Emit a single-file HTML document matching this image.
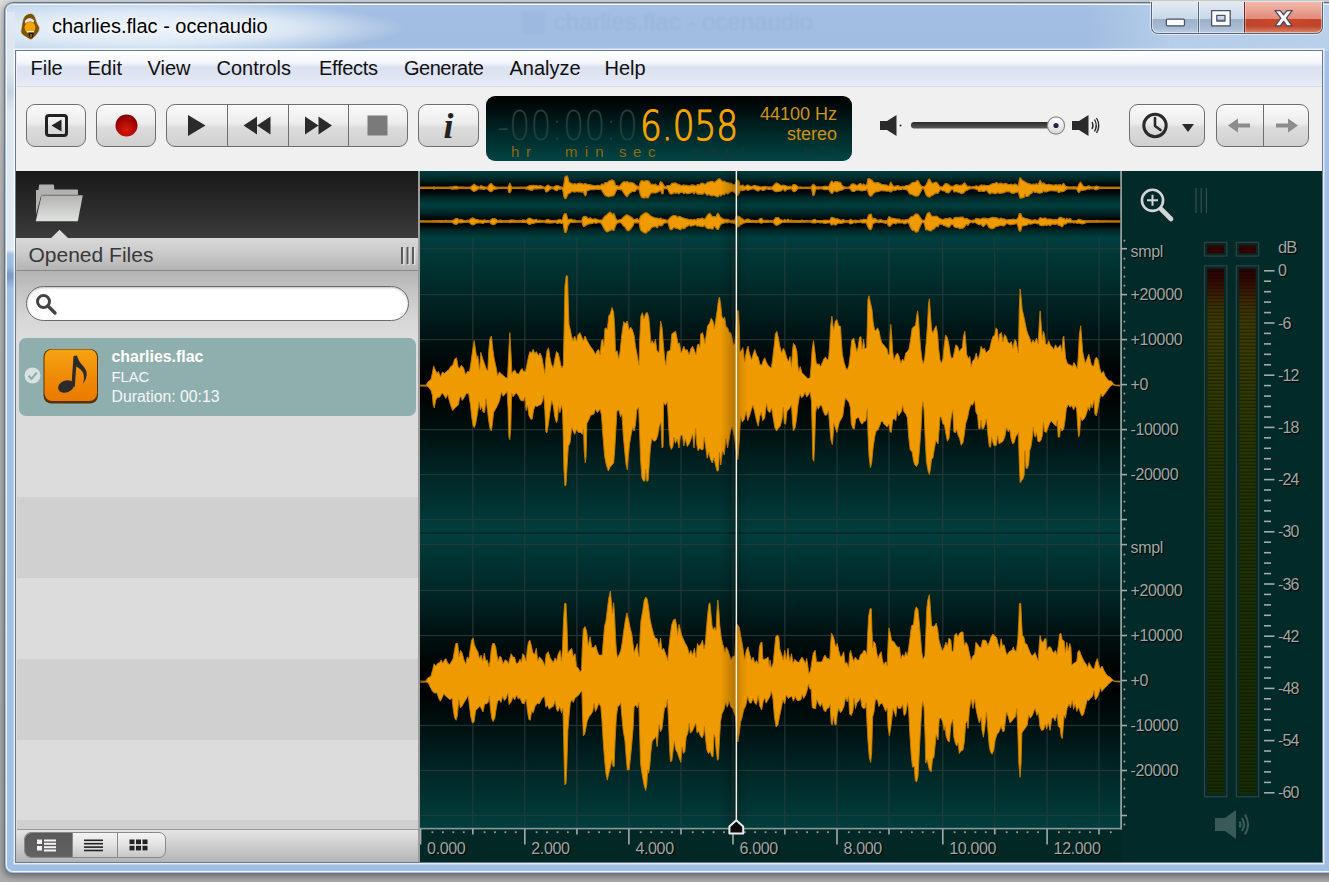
<!DOCTYPE html>
<html>
<head>
<meta charset="utf-8">
<title>charlies.flac - ocenaudio</title>
<style>
html,body{margin:0;padding:0;}
body{width:1329px;height:882px;overflow:hidden;position:relative;background:#b9b9b9;font-family:"Liberation Sans",sans-serif;}
.abs{position:absolute;}
#desk{left:0;top:0;width:1329px;height:882px;background:linear-gradient(180deg,#dcdcdc 0px,#d2d2d2 40px,#bdbdbd 200px,#b2b2b2 600px,#ababab 882px);}
#frame{left:5px;top:3px;width:1340px;height:870px;border-radius:8px;background:#a3c1e4;box-shadow:0 0 0 1px #6f7276, 0 2px 6px 2px rgba(0,0,0,.35);}
#frame-in{left:1px;top:1px;right:1px;bottom:1px;border-radius:7px;border:1.5px solid rgba(255,255,255,.85);background:linear-gradient(180deg,#a6c1e4 0px,#a2bee2 10px,#a1bde1 34px,#a4c0e3 48px,#a2bfe3 140px,#a0bfe3 400px,#a0bfe3 100%);}
#titleglow{left:2px;top:2px;width:1322px;height:46px;border-radius:6px 0 0 0;background:radial-gradient(ellipse 250px 27px at 150px 23px,rgba(240,246,252,.92) 0%,rgba(230,239,248,.8) 55%,rgba(205,222,240,0) 100%),linear-gradient(90deg,rgba(200,219,239,.9) 0px,rgba(198,217,238,.8) 150px,rgba(190,211,235,.5) 260px,rgba(180,205,233,.0) 350px,rgba(180,205,233,.0) 1080px,rgba(200,220,240,.5) 1160px,rgba(200,220,240,.6) 100%);}
#client-border{left:15px;top:49.5px;width:1306px;height:811.5px;border:1px solid #6b7b8e;box-shadow:0 0 0 1.5px rgba(255,255,255,.7);background:#f0f0f0;}
#title{left:52px;top:15px;font-size:20px;color:#000;white-space:nowrap;letter-spacing:0;text-shadow:0 0 8px #fff,0 0 8px #fff;}
#menubar{left:17px;top:51px;width:1305px;height:35px;background:linear-gradient(180deg,#ffffff 0px,#f4f6fb 12px,#dde2f1 16px,#dfe4f2 24px,#e8ecf7 35px);border-bottom:1px solid #d8dcea;}
.mi{position:absolute;top:56.5px;font-size:20px;color:#111;white-space:nowrap;}
#toolbar{left:17px;top:87px;width:1305px;height:84px;background:#f0f0f0;}
.btn{position:absolute;top:104px;height:43px;border:1px solid #6e6e6e;border-radius:9px;background:linear-gradient(180deg,#fafafa 0%,#ececec 45%,#dcdcdc 55%,#d0d0d0 100%);box-shadow:inset 0 1px 0 #fff;box-sizing:border-box;}
.sep{position:absolute;top:0;width:1px;height:100%;background:#6e6e6e;}
</style>
</head>
<body>
<div id="desk" class="abs"></div>
<div id="frame" class="abs"><div id="frame-in" class="abs"></div><div id="titleglow" class="abs"></div></div>
<div class="abs" style="left:7px;top:12px;width:8px;height:300px;background:linear-gradient(180deg,#dfe8f3 0px,#dbe5f0 60px,#c4d2e2 80px,#dde7f2 100px,#e1eaf4 238px,#a2c0e3 242px,#9bbae0 255px,#7d99c0 262px,#7f9bc2 266px,#9fbee2 276px,#a0bfe3 300px);"></div>
<div id="client-border" class="abs"></div>
<div class="abs" style="left:554px;top:8px;font-size:24px;white-space:nowrap;color:rgba(105,140,190,.17);filter:blur(1px);">charlies.flac - ocenaudio</div><div class="abs" style="left:522px;top:11px;width:23px;height:23px;border-radius:3px;background:rgba(120,150,195,.10);filter:blur(1px);"></div>
<div id="title" class="abs">charlies.flac - ocenaudio</div>

<svg class="abs" style="left:14px;top:8px" width="34" height="36" viewBox="14 8 34 36">
 <path d="M31 13.2 Q34.5 13.8 35.6 18 Q37 24 39.6 27.5 Q40 31 36.5 35 L31.8 39.6 Q30.2 40 28.6 38.8 L22.6 35 Q19.8 32.5 21.2 28.5 Q22 22 23.2 18.5 Q25.5 13.5 31 13.2 Z" fill="#7d5200" stroke="#e8eef6" stroke-width="0.9" stroke-opacity="0.8"/>
 <ellipse cx="30" cy="27.6" rx="5.4" ry="5.8" fill="#f3a300"/>
 <path d="M24.8 21 Q29.5 15.2 34.2 20.5 L33.6 22.8 Q29.5 19.8 25.4 23.6 Z" fill="#e4e4e4"/>
 <rect x="27" y="31" width="7" height="1.5" fill="#e9e9e9"/>
 <path d="M28.3 32.6 L33.6 32.6 L33 37.6 L29.6 37.8 Z" fill="#141414"/>
 <rect x="30" y="34" width="2.2" height="3.5" fill="#8a5a00"/>
</svg>
<div id="wbtns" class="abs" style="left:1150.5px;top:1.5px;width:172px;height:32.5px;border:1px solid #56657a;border-top:none;border-radius:0 0 7px 7px;box-sizing:border-box;overflow:hidden;box-shadow:0 0 0 1px rgba(255,255,255,.55);">
 <div class="abs" style="left:0;top:0;width:92px;height:17px;background:linear-gradient(180deg,#e2eaf4,#c9d7e8);"></div>
 <div class="abs" style="left:0;top:17px;width:92px;height:15px;background:linear-gradient(180deg,#9db0cb,#a9bbd4 60%,#c2d1e5);"></div>
 <div class="abs" style="left:92px;top:0;width:80px;height:17px;background:linear-gradient(180deg,#f2b9ad,#e08a78);"></div>
 <div class="abs" style="left:92px;top:17px;width:80px;height:15px;background:radial-gradient(ellipse at 50% 0%,#d24a25 0%,#c2452a 45%,#b5442f 100%);"></div>
 <div class="abs" style="left:92px;top:24px;width:80px;height:8px;background:linear-gradient(180deg,rgba(226,150,120,0),rgba(230,160,130,.85));"></div>
 <div class="abs" style="left:46px;top:0;width:1px;height:32px;background:#56657a;box-shadow:1px 0 0 rgba(255,255,255,.5),-1px 0 0 rgba(255,255,255,.3);"></div>
 <div class="abs" style="left:92px;top:0;width:1px;height:32px;background:#6a2a1c;box-shadow:1px 0 0 rgba(255,255,255,.35),-1px 0 0 rgba(255,255,255,.3);"></div>
 <div class="abs" style="left:0;top:0;width:170px;height:31px;border:1px solid rgba(255,255,255,.45);border-top:none;border-radius:0 0 6px 6px;box-sizing:border-box;"></div>
 <svg class="abs" style="left:0;top:0" width="170" height="32" viewBox="0 0 170 32">
  <rect x="14.3" y="17.2" width="18.2" height="6.6" rx="1" fill="#fbfbfb" stroke="#47536a" stroke-width="1.3"/>
  <path d="M59.6 8.6 h18.6 v15.2 h-18.6 Z M64.8 13.4 v5.6 h8.2 v-5.6 Z" fill="#fbfbfb" fill-rule="evenodd" stroke="#47536a" stroke-width="1.3" stroke-linejoin="round"/>
  <path d="M123 8.6 h5.3 l3.3 4.3 l3.3 -4.3 h5.3 l-5.8 7.6 l5.8 7.6 h-5.3 l-3.3 -4.3 l-3.3 4.3 h-5.3 l5.8 -7.6 Z" fill="#fbfbfb" stroke="#4a4a5c" stroke-width="1.3" stroke-linejoin="round"/>
 </svg>
</div>
<div id="menubar" class="abs"></div>
<div class="mi" style="left:30.5px">File</div>
<div class="mi" style="left:87.5px">Edit</div>
<div class="mi" style="left:147.5px">View</div>
<div class="mi" style="left:216.5px">Controls</div>
<div class="mi" style="left:319px;letter-spacing:-0.3px">Effects</div>
<div class="mi" style="left:404px;letter-spacing:-0.5px">Generate</div>
<div class="mi" style="left:509.5px">Analyze</div>
<div class="mi" style="left:604.5px">Help</div>
<div id="toolbar" class="abs"></div>

<div class="btn" style="left:26px;width:60px;">
 <svg class="abs" style="left:0;top:0" width="58" height="40" viewBox="0 0 58 40"><rect x="19.5" y="10.5" width="20" height="20" rx="2.5" fill="none" stroke="#222" stroke-width="3"/><path d="M34.5 14.5 L34.5 26.5 L24.5 20.5 Z" fill="#222"/></svg>
</div>
<div class="btn" style="left:96px;width:60px;">
 <svg class="abs" style="left:0;top:0" width="58" height="40" viewBox="0 0 58 40"><defs><radialGradient id="rg" cx="50%" cy="70%" r="60%"><stop offset="0" stop-color="#d81a0a"/><stop offset="0.6" stop-color="#b00a04"/><stop offset="1" stop-color="#8e0000"/></radialGradient></defs><circle cx="29.5" cy="20.5" r="11" fill="url(#rg)"/></svg>
</div>
<div class="btn" style="left:166px;width:242px;">
 <div class="sep" style="left:60px"></div><div class="sep" style="left:121px"></div><div class="sep" style="left:181px"></div>
 <svg class="abs" style="left:0;top:0" width="240" height="40" viewBox="0 0 240 40">
  <path d="M21 10 L21 31 L38.5 20.5 Z" fill="#2a2a2a"/>
  <path d="M90 11.5 L90 29.5 L76.5 20.5 Z M103.5 11.5 L103.5 29.5 L90 20.5 Z" fill="#2a2a2a"/>
  <path d="M138 11.5 L138 29.5 L151.5 20.5 Z M151.5 11.5 L151.5 29.5 L165 20.5 Z" fill="#2a2a2a"/>
  <rect x="200.5" y="10.5" width="20" height="20" fill="#7a7a7a"/>
 </svg>
</div>
<div class="btn" style="left:418px;width:61px;">
 <div class="abs" style="left:0;width:59px;top:-1.5px;text-align:center;font-family:'Liberation Serif',serif;font-style:italic;font-weight:bold;font-size:36px;color:#222;line-height:44px;">i</div>
</div>
<div id="lcd" class="abs" style="left:485.5px;top:96px;width:366px;height:65px;border-radius:9px;background:linear-gradient(180deg,#000 0%,#001010 25%,#012a2a 60%,#024444 100%);overflow:hidden;">
 <svg class="abs" style="left:0;top:0" width="366" height="65" viewBox="0 0 366 65">
  <g font-family="Liberation Sans, sans-serif">
  <text x="11" y="43.5" font-size="40" fill="#21403c" textLength="141" lengthAdjust="spacingAndGlyphs" font-family="DejaVu Sans Light, DejaVu Sans, sans-serif" font-weight="200">-00:00:0</text>
  <text x="154" y="43.5" font-size="40" fill="#f7a400" textLength="98" lengthAdjust="spacingAndGlyphs" font-family="DejaVu Sans Light, DejaVu Sans, sans-serif" font-weight="200" stroke="#f7a400" stroke-width="1.1">6.058</text>
  <text x="25" y="61" font-size="15" fill="#8c6a10" textLength="20" lengthAdjust="spacing">hr</text>
  <text x="79" y="61" font-size="15" fill="#8c6a10" textLength="38.5" lengthAdjust="spacing">min</text>
  <text x="133" y="61" font-size="15" fill="#8c6a10" textLength="36.5" lengthAdjust="spacing">sec</text>
  <text x="206" y="61" font-size="15" fill="#123a38" textLength="52" lengthAdjust="spacing">smpl</text>
  <text x="351" y="24" font-size="18" fill="#d09212" text-anchor="end">44100 Hz</text>
  <text x="351" y="43.5" font-size="18" fill="#d09212" text-anchor="end">stereo</text>
  </g>
  <path d="M318 50 L318 59 L325 54.5 Z" fill="#0d3836"/>
  <rect x="333.5" y="51" width="14" height="7" rx="3" fill="none" stroke="#0d3836" stroke-width="1.6"/>
 </svg>
</div>
<svg class="abs" style="left:875px;top:108px" width="235" height="36" viewBox="0 0 235 36">
 <defs><linearGradient id="trk" x1="0" y1="0" x2="0" y2="1"><stop offset="0" stop-color="#2a2a2a"/><stop offset="1" stop-color="#5a5a5a"/></linearGradient>
 <linearGradient id="knb" x1="0" y1="0" x2="0" y2="1"><stop offset="0" stop-color="#ffffff"/><stop offset="1" stop-color="#d8d8d8"/></linearGradient></defs>
 <path d="M5 13 L12 13 L21.5 7 L21.5 28 L12 22 L5 22 Z" fill="#2a2a2a"/>
 <circle cx="25.5" cy="17.5" r="1" fill="#2a2a2a"/>
 <rect x="36" y="14" width="146" height="6.5" rx="3.2" fill="url(#trk)"/>
 <circle cx="181" cy="17.5" r="8.6" fill="url(#knb)" stroke="#8a8a8a" stroke-width="1.2"/>
 <circle cx="181" cy="17.5" r="2.6" fill="#1e2a44"/>
 <path d="M197 13 L204 13 L213.5 7 L213.5 28 L204 22 L197 22 Z" fill="#2a2a2a"/>
 <path d="M217 14 Q219 17.5 217 21" fill="none" stroke="#2a2a2a" stroke-width="1.4"/>
 <path d="M219.5 11.5 Q223 17.5 219.5 23.5" fill="none" stroke="#2a2a2a" stroke-width="1.4"/>
 <path d="M221.5 10 Q226 17.5 221.5 25" fill="none" stroke="#2a2a2a" stroke-width="1.3"/>
</svg>
<div class="btn" style="left:1129px;width:76px;">
 <svg class="abs" style="left:0;top:0" width="74" height="40" viewBox="0 0 74 40"><circle cx="25" cy="20.5" r="11.2" fill="none" stroke="#2a2a2a" stroke-width="3"/><path d="M25 13 L25 21 L30.5 25" fill="none" stroke="#2a2a2a" stroke-width="2.6" stroke-linecap="round" stroke-linejoin="round"/><path d="M52 19 L64 19 L58 27 Z" fill="#2a2a2a"/></svg>
</div>
<div class="btn" style="left:1216px;width:93px;">
 <div class="sep" style="left:46px"></div>
 <svg class="abs" style="left:0;top:0" width="91" height="40" viewBox="0 0 91 40">
  <path d="M11 20.5 L21 13.5 L21 18.5 L33 18.5 L33 22.5 L21 22.5 L21 27.5 Z" fill="#8c8c8c"/>
  <path d="M81 20.5 L71 13.5 L71 18.5 L59 18.5 L59 22.5 L71 22.5 L71 27.5 Z" fill="#8c8c8c"/>
 </svg>
</div>
<!--TOOLBAR-->

<div class="abs" style="left:16px;top:171px;width:2px;height:691px;background:linear-gradient(180deg,#191919 0px,#3b3b3b 67px,#dadada 67px,#bdbdbd 99px,#8c8c8c 99px,#b3b3b3 100px,#dcdcdc 166px,#dcdcdc 658px,#cfcfcf 670px,#b4b4b4 691px);"></div>
<div id="lp" class="abs" style="left:17px;top:171px;width:401px;height:691px;background:#dcdcdc;overflow:hidden;">
 <div class="abs" style="left:0;top:0;width:401px;height:67px;background:linear-gradient(180deg,#191919 0%,#262626 40%,#3b3b3b 100%);"></div>
 <svg class="abs" style="left:0;top:0" width="401" height="100" viewBox="0 0 401 100">
  <defs><linearGradient id="fld" x1="0" y1="0" x2="0" y2="1"><stop offset="0" stop-color="#b4b5b3"/><stop offset="1" stop-color="#e0e2e0"/></linearGradient></defs>
  <path d="M19 19 L21.5 19 L22 14.5 Q22 13.5 23 13.5 L36 13.5 Q37 13.5 37 14.5 L37.3 18.5 L60 18.5 Q61 18.5 61 19.5 L61 25 L24 25 L19 44 Z" fill="#b2b3b1"/>
  <path d="M24.6 24.3 L65.8 24.3 L60.8 50.3 L18.8 50.3 Z" fill="url(#fld)"/>
  <path d="M24.4 24.2 L61.5 24.2" stroke="#6e6e6c" stroke-width="1.1"/>
  <path d="M42.5 58.7 L34.2 67 L51 67 Z" fill="#dadada"/>
 </svg>
 <div class="abs" style="left:0;top:67px;width:401px;height:32px;background:linear-gradient(180deg,#d8d8d8 0%,#cdcdcd 40%,#b4b4b4 100%);border-bottom:1px solid #8a8a8a;"></div>
 <div class="abs" style="left:11.5px;top:71.5px;font-size:21px;color:#383838;white-space:nowrap;">Opened Files</div>
 <div class="abs" style="left:384px;top:76px;width:2px;height:17px;background:#5c5c5c;box-shadow:5.5px 0 0 #5c5c5c,11px 0 0 #5c5c5c,1.5px 1px 0 rgba(255,255,255,.5),7px 1px 0 rgba(255,255,255,.5),12.5px 1px 0 rgba(255,255,255,.5);"></div>
 <div class="abs" style="left:0;top:100px;width:401px;height:66px;background:linear-gradient(180deg,#b3b3b3 0%,#c4c4c4 30%,#d6d6d6 70%,#dcdcdc 100%);"></div>
 <div class="abs" style="left:9px;top:115px;width:381px;height:33px;border:1.5px solid #6a6a6a;border-radius:18px;background:#fff;box-shadow:inset 0 1px 2px rgba(0,0,0,.25);"></div>
 <svg class="abs" style="left:17px;top:121px" width="26" height="26" viewBox="0 0 26 26"><circle cx="9.5" cy="9.5" r="6" fill="none" stroke="#444" stroke-width="3"/><path d="M14 14 L21 21" stroke="#444" stroke-width="3.4" stroke-linecap="round"/></svg>
 <!-- stripes -->
 <div class="abs" style="left:0;top:246px;width:401px;height:80px;background:#dcdcdc;"></div>
 <div class="abs" style="left:0;top:326px;width:401px;height:81px;background:#d0d0d0;"></div>
 <div class="abs" style="left:0;top:407px;width:401px;height:81px;background:#dcdcdc;"></div>
 <div class="abs" style="left:0;top:488px;width:401px;height:81px;background:#d0d0d0;"></div>
 <div class="abs" style="left:0;top:569px;width:401px;height:80px;background:#dcdcdc;"></div>
 <div class="abs" style="left:0;top:649px;width:401px;height:10px;background:#d0d0d0;"></div>
 <!-- selected item -->
 <div class="abs" style="left:2px;top:167px;width:397px;height:78px;border-radius:7px;background:#8fafae;"></div>
 <svg class="abs" style="left:5px;top:194px" width="22" height="22" viewBox="0 0 22 22"><circle cx="10.5" cy="10.5" r="8" fill="#d9e2e2"/><path d="M6.5 10.8 L9.5 13.8 L14.8 7.6" fill="none" stroke="#8fafae" stroke-width="2.2"/></svg>
 <svg class="abs" style="left:25px;top:176px" width="60" height="60" viewBox="0 0 60 60">
  <defs><linearGradient id="org" x1="0" y1="0" x2="0" y2="1"><stop offset="0" stop-color="#f6a312"/><stop offset="0.5" stop-color="#f08c06"/><stop offset="1" stop-color="#ea7a00"/></linearGradient></defs>
  <rect x="1.5" y="2" width="54.5" height="54.5" rx="8" fill="#5a3000"/>
  <rect x="2.5" y="2.5" width="52.5" height="51.5" rx="7.5" fill="url(#org)"/>
  <ellipse cx="24" cy="39.5" rx="8.2" ry="6" transform="rotate(-22 24 39.5)" fill="#2b2b2b"/>
  <path d="M29.5 38 L31.5 9 L35 8.5 Q36 14 42 20 Q48 27 41 37 Q44 27 38.5 22.5 Q35.5 20 34.2 19.5 L32.8 40 Z" fill="#2b2b2b"/>
 </svg>
 <div class="abs" style="left:94.5px;top:176px;font-size:15.9px;font-weight:bold;color:#fff;white-space:nowrap;line-height:20px;">charlies.flac</div>
 <div class="abs" style="left:94.5px;top:196px;font-size:14.7px;color:#f4f8f8;white-space:nowrap;line-height:20px;">FLAC</div>
 <div class="abs" style="left:94.5px;top:216px;font-size:15.8px;color:#f4f8f8;white-space:nowrap;line-height:20px;">Duration: 00:13</div>
 <!-- bottom bar -->
 <div class="abs" style="left:0;top:658px;width:401px;height:33px;background:linear-gradient(180deg,#e4e4e4 0%,#cfcfcf 45%,#b4b4b4 100%);border-top:1px solid #9a9a9a;box-sizing:border-box;"></div>
 <div class="abs" style="left:7px;top:661px;width:142px;height:26px;border-radius:7px;border:1px solid #8a8a8a;box-sizing:border-box;background:linear-gradient(180deg,#f4f4f4 0%,#e2e2e2 50%,#c6c6c6 100%);overflow:hidden;">
  <div class="abs" style="left:0;top:0;width:47px;height:26px;background:linear-gradient(180deg,#5a5a5a,#636363);"></div>
  <div class="abs" style="left:92px;top:0;width:1px;height:25px;background:#8a8a8a;"></div>
  <div class="abs" style="left:47px;top:0;width:1px;height:25px;background:#8a8a8a;"></div>
  <svg class="abs" style="left:0;top:-0.5px" width="140" height="23" viewBox="0 0 140 23">
   <g fill="#f4f4f4"><rect x="12" y="6.5" width="5" height="4.5"/><rect x="12" y="13" width="5" height="4.5"/><rect x="19" y="6.5" width="12" height="2"/><rect x="19" y="9.8" width="12" height="2"/><rect x="19" y="13.2" width="12" height="2"/><rect x="19" y="16.5" width="12" height="2"/></g>
   <g fill="#222"><rect x="59" y="6.5" width="19" height="1.6"/><rect x="59" y="9.9" width="19" height="1.6"/><rect x="59" y="13.3" width="19" height="1.6"/><rect x="59" y="16.7" width="19" height="1.6"/></g>
   <g fill="#222"><rect x="104.5" y="6.5" width="5" height="4.6"/><rect x="111" y="6.5" width="5" height="4.6"/><rect x="117.5" y="6.5" width="5" height="4.6"/><rect x="104.5" y="12.8" width="5" height="4.6"/><rect x="111" y="12.8" width="5" height="4.6"/><rect x="117.5" y="12.8" width="5" height="4.6"/></g>
  </svg>
 </div>
</div>
<div class="abs" style="left:418px;top:171px;width:2px;height:691px;background:#9c9c9c;"></div>
<!--LEFT-->
<div id="wv" class="abs" style="left:420px;top:171px;width:701px;height:658px;background:#003c3b;overflow:hidden;">
<div class="abs" style="left:0;top:0;width:701px;height:33.5px;background:linear-gradient(180deg,#003e3d 0%,#002a2a 22%,#000 45%,#000 58%,#002a2a 80%,#003e3d 100%);"></div>
<div class="abs" style="left:0;top:33.5px;width:701px;height:33.5px;background:linear-gradient(180deg,#003e3d 0%,#002a2a 22%,#000 45%,#000 58%,#002a2a 80%,#004040 100%);"></div>
<div class="abs" style="left:0;top:67px;width:701px;height:295px;background:linear-gradient(180deg,#003e3d 0%,#002827 19%,#001010 35%,#000 48%,#000 52%,#001010 65%,#002827 81%,#003e3d 100%);"></div>
<div class="abs" style="left:0;top:362px;width:701px;height:296px;background:linear-gradient(180deg,#003e3d 0%,#002827 19%,#001010 35%,#000 48%,#000 52%,#001010 65%,#002827 81%,#003e3d 100%);"></div>
<svg class="abs" style="left:0;top:0" width="701" height="658" viewBox="420 171 701 658">
<g fill="#2e3b3a" opacity="0.8"><rect x="472.2" y="238" width="1.2" height="590" /><rect x="524.2" y="238" width="1.2" height="590" /><rect x="576.3" y="238" width="1.2" height="590" /><rect x="628.3" y="238" width="1.2" height="590" /><rect x="680.4" y="238" width="1.2" height="590" /><rect x="732.4" y="238" width="1.2" height="590" /><rect x="784.2" y="238" width="1.2" height="590" /><rect x="836.4" y="238" width="1.2" height="590" /><rect x="888.4" y="238" width="1.2" height="590" /><rect x="942.2" y="238" width="1.2" height="590" /><rect x="994.2" y="238" width="1.2" height="590" /><rect x="1046.5" y="238" width="1.2" height="590" /><rect x="1098.4" y="238" width="1.2" height="590" /><rect x="420" y="248.1" width="701" height="1.2" /><rect x="420" y="294.0" width="701" height="1.2" /><rect x="420" y="339.0" width="701" height="1.2" /><rect x="420" y="384.0" width="701" height="1.2" /><rect x="420" y="429.0" width="701" height="1.2" /><rect x="420" y="474.0" width="701" height="1.2" /><rect x="420" y="519.0" width="701" height="1.2" /><rect x="420" y="544.0" width="701" height="1.2" /><rect x="420" y="589.9" width="701" height="1.2" /><rect x="420" y="634.9" width="701" height="1.2" /><rect x="420" y="679.9" width="701" height="1.2" /><rect x="420" y="724.9" width="701" height="1.2" /><rect x="420" y="769.9" width="701" height="1.2" /><rect x="420" y="814.9" width="701" height="1.2" /></g>
<rect x="420" y="532.3" width="701" height="1.4" fill="#002423"/>
<defs><linearGradient id="cshadow" gradientUnits="userSpaceOnUse" x1="720" y1="0" x2="748" y2="0"><stop offset="0" stop-color="#000" stop-opacity="0"/><stop offset="0.5" stop-color="#000" stop-opacity="0.22"/><stop offset="0.571" stop-color="#000" stop-opacity="0.25"/><stop offset="0.72" stop-color="#000" stop-opacity="0.1"/><stop offset="1" stop-color="#000" stop-opacity="0"/></linearGradient>
<path id="w1" d="M420.4 385.6 L426.2 385.6 L427.5 382.2 L430.9 379.5 L432.3 373.4 L433.6 365.9 L435.0 369.3 L437.0 373.4 L438.4 371.3 L440.4 376.8 L442.5 372.0 L444.5 373.4 L446.6 371.3 L448.6 370.0 L450.6 366.6 L452.7 365.2 L454.7 359.1 L456.5 357.7 L458.1 366.6 L459.5 368.6 L461.3 365.2 L463.6 367.9 L465.6 374.7 L467.6 371.3 L469.4 372.0 L471.0 362.5 L472.4 351.6 L474.2 340.7 L475.8 351.6 L476.8 358.4 L477.8 355.7 L479.5 370.0 L480.8 352.3 L482.6 358.4 L484.6 363.9 L486.7 370.0 L487.8 370.7 L488.7 351.6 L489.8 339.4 L491.4 336.0 L492.8 348.9 L494.2 358.4 L496.2 367.9 L497.6 376.1 L499.3 372.0 L501.7 374.1 L503.7 376.1 L505.7 377.5 L507.5 378.1 L508.5 357.1 L509.8 332.6 L511.2 357.1 L511.9 373.4 L513.2 371.3 L514.8 370.0 L516.6 373.4 L518.7 374.1 L520.7 370.0 L522.1 368.6 L523.4 371.3 L525.5 371.3 L526.8 365.2 L528.4 357.1 L529.8 351.6 L531.6 353.0 L533.2 349.3 L534.7 353.7 L536.3 351.6 L538.4 355.7 L540.1 353.0 L541.8 357.1 L543.1 363.9 L544.8 373.4 L545.9 358.4 L547.2 350.3 L548.6 347.8 L549.9 357.1 L551.3 363.9 L553.3 367.9 L554.7 359.8 L556.5 351.6 L558.1 353.0 L559.5 358.4 L560.8 365.2 L561.9 367.9 L563.3 365.2 L564.2 324.4 L564.9 286.3 L566.3 275.4 L567.6 276.1 L568.3 304.0 L569.0 324.4 L570.3 329.8 L571.7 336.6 L573.1 340.7 L574.7 336.0 L576.5 341.4 L577.8 335.3 L579.9 332.6 L581.6 336.6 L583.3 340.7 L585.0 336.0 L586.7 340.0 L588.7 343.4 L590.7 346.8 L592.8 349.6 L594.0 351.6 L595.4 354.3 L597.4 350.3 L598.8 349.6 L600.1 355.0 L601.5 340.7 L602.8 339.4 L603.8 346.2 L604.9 328.5 L606.2 327.8 L607.3 329.8 L608.7 316.2 L610.3 313.5 L612.0 307.4 L613.7 312.2 L614.7 327.1 L615.5 351.6 L617.1 350.9 L618.8 358.4 L620.1 351.6 L621.9 333.9 L623.7 321.7 L625.3 323.7 L627.3 321.0 L629.1 329.8 L630.7 327.1 L632.4 329.8 L634.1 335.3 L635.5 346.2 L637.3 355.7 L638.9 365.2 L639.8 338.0 L640.9 316.2 L642.3 312.8 L644.1 319.0 L645.7 313.5 L647.3 312.4 L648.8 317.6 L649.8 328.5 L650.9 343.4 L652.2 340.7 L653.8 344.1 L655.5 339.4 L656.8 350.3 L659.0 353.0 L659.7 335.3 L660.6 321.0 L662.0 327.1 L663.1 340.7 L664.5 357.1 L665.8 365.2 L667.2 351.6 L668.8 350.9 L670.4 350.3 L671.8 333.9 L673.6 332.6 L675.6 331.2 L677.0 338.0 L678.1 344.1 L679.4 342.8 L681.1 353.0 L682.4 350.3 L683.8 346.2 L685.4 350.3 L687.2 349.6 L689.2 355.0 L690.8 348.9 L692.6 346.2 L694.4 350.3 L696.0 355.0 L697.4 344.8 L698.7 344.1 L699.8 347.5 L700.8 333.9 L702.5 332.6 L703.9 338.0 L704.9 343.4 L706.2 335.3 L707.6 325.8 L709.3 323.7 L711.2 318.3 L713.0 321.0 L714.4 328.5 L715.7 320.3 L717.1 310.8 L718.5 299.9 L719.4 297.2 L720.5 302.6 L721.9 316.2 L723.2 319.0 L724.6 316.9 L726.2 327.1 L727.7 327.8 L729.3 332.6 L730.7 332.6 L732.1 338.0 L733.4 344.8 L734.8 343.4 L735.5 335.3 L737.1 310.8 L738.5 310.8 L739.3 327.1 L739.9 351.6 L741.6 350.3 L742.9 347.5 L744.7 361.8 L746.3 351.6 L748.0 346.2 L749.3 353.0 L751.5 359.8 L753.1 354.3 L754.8 349.6 L756.5 355.0 L758.2 357.1 L759.9 364.5 L761.6 365.2 L763.3 360.5 L764.7 357.7 L766.5 362.5 L768.1 365.2 L770.0 367.3 L771.4 367.9 L772.7 358.4 L774.1 346.2 L775.4 333.9 L776.8 331.2 L778.4 338.0 L779.8 346.2 L781.6 353.0 L783.3 348.2 L785.0 351.6 L786.6 357.1 L788.4 361.8 L790.1 356.4 L791.5 366.6 L792.4 351.6 L793.4 343.4 L795.2 345.5 L796.9 351.6 L797.9 365.2 L798.8 371.3 L800.2 366.6 L802.0 372.7 L804.0 374.7 L806.0 376.8 L808.1 378.8 L810.1 377.5 L811.1 365.2 L812.2 348.9 L813.5 340.7 L814.9 351.6 L816.2 362.5 L817.6 364.5 L819.2 363.9 L820.6 366.6 L822.4 362.5 L824.1 358.4 L825.5 357.1 L827.1 359.8 L828.5 359.1 L829.6 346.2 L830.5 327.1 L831.9 316.2 L832.8 324.4 L833.7 329.8 L835.3 321.0 L836.9 319.6 L838.7 325.8 L840.5 326.4 L841.4 340.7 L842.4 354.3 L844.1 362.5 L845.9 367.9 L847.3 370.0 L848.9 365.2 L850.3 354.3 L851.6 340.7 L853.7 338.0 L855.0 343.4 L856.8 351.6 L858.1 347.5 L859.5 337.3 L860.9 336.6 L862.2 349.6 L863.6 339.4 L864.9 348.9 L866.6 347.5 L867.3 324.4 L867.9 299.9 L869.0 295.8 L870.4 302.6 L872.0 309.4 L873.1 321.7 L874.5 329.8 L876.1 330.5 L877.5 327.8 L879.1 331.2 L880.4 338.0 L881.8 342.8 L883.6 344.8 L885.3 346.8 L887.0 348.9 L888.3 355.0 L889.4 354.3 L890.0 335.3 L890.8 324.4 L891.7 335.3 L892.7 351.6 L894.0 359.8 L895.8 355.0 L897.6 353.0 L899.2 356.4 L900.8 363.2 L902.6 359.1 L904.0 361.1 L905.7 353.0 L907.4 351.6 L909.0 348.9 L910.4 340.7 L912.1 328.5 L913.9 326.4 L915.5 325.8 L916.6 316.2 L917.6 310.8 L918.5 319.0 L919.6 335.3 L920.7 348.9 L922.1 359.8 L923.4 363.9 L924.8 357.1 L926.1 343.4 L927.5 324.4 L928.5 304.0 L929.4 298.8 L930.5 314.9 L931.6 329.8 L932.9 333.2 L934.6 328.5 L936.2 325.8 L937.6 333.9 L938.7 348.9 L940.0 359.8 L941.4 363.2 L943.0 358.4 L944.1 346.2 L945.5 335.3 L946.0 335.3 L947.4 338.0 L948.7 343.4 L950.1 353.0 L951.4 358.4 L953.1 357.7 L954.4 351.6 L955.8 344.8 L957.6 346.2 L959.3 351.6 L961.0 348.9 L962.3 347.5 L963.4 336.6 L964.8 331.2 L965.7 340.7 L966.7 354.3 L968.4 358.4 L969.8 356.4 L971.2 366.6 L972.5 361.1 L974.6 359.1 L976.2 353.0 L978.0 359.8 L979.7 354.3 L981.1 346.2 L982.7 349.6 L984.4 348.2 L986.1 353.0 L987.9 350.9 L989.5 349.6 L991.2 342.1 L992.9 336.6 L994.7 335.3 L996.1 327.8 L997.4 329.8 L998.4 341.4 L999.7 333.9 L1001.5 332.6 L1002.9 342.1 L1004.5 334.6 L1006.1 336.6 L1007.9 342.1 L1009.7 343.4 L1011.3 341.4 L1012.9 348.2 L1014.7 339.4 L1016.0 340.7 L1017.0 346.2 L1018.4 353.0 L1019.2 310.8 L1020.1 289.0 L1021.1 297.2 L1022.2 309.4 L1023.8 316.2 L1025.2 323.0 L1026.5 329.8 L1027.9 333.9 L1029.7 338.0 L1031.4 343.4 L1033.1 340.0 L1034.7 342.8 L1036.5 338.0 L1038.2 344.1 L1039.2 324.4 L1040.1 310.8 L1041.2 324.4 L1042.3 339.4 L1043.4 331.2 L1044.6 335.3 L1045.6 344.1 L1047.3 344.8 L1048.7 340.7 L1050.5 345.5 L1052.1 346.8 L1053.7 349.6 L1055.5 344.8 L1057.3 348.2 L1058.9 346.8 L1060.5 344.8 L1061.9 351.6 L1063.0 338.0 L1063.8 336.0 L1064.6 346.2 L1065.7 358.4 L1067.3 363.2 L1069.1 364.5 L1070.9 365.2 L1072.5 366.6 L1073.9 362.5 L1075.5 365.2 L1077.3 368.6 L1078.2 357.1 L1079.3 335.3 L1080.7 325.8 L1081.7 338.0 L1082.7 351.6 L1084.1 358.4 L1085.4 363.2 L1087.2 358.4 L1088.8 354.3 L1090.2 359.8 L1091.5 365.2 L1093.6 366.6 L1094.9 359.8 L1096.3 357.1 L1098.1 359.8 L1099.7 367.9 L1101.3 373.4 L1103.5 371.3 L1105.1 376.1 L1107.2 378.8 L1109.2 380.9 L1111.3 380.9 L1113.3 383.6 L1115.3 385.6 L1120.1 385.9 L1120.1 385.7 L1114.7 385.4 L1112.6 384.8 L1110.6 386.1 L1108.5 388.8 L1106.5 391.6 L1104.5 394.3 L1102.4 397.0 L1100.8 393.6 L1099.4 400.4 L1097.7 409.9 L1096.3 416.0 L1094.9 414.0 L1094.0 400.4 L1092.2 407.9 L1090.9 403.8 L1089.5 410.6 L1088.1 407.2 L1086.8 412.6 L1085.4 416.7 L1083.6 419.4 L1082.0 420.8 L1080.7 417.4 L1079.6 434.4 L1078.6 437.1 L1077.7 426.2 L1076.6 408.6 L1075.2 405.8 L1073.6 409.9 L1071.8 405.8 L1070.0 407.2 L1068.4 404.5 L1066.4 408.6 L1065.0 420.8 L1063.7 429.0 L1061.9 431.0 L1060.5 427.6 L1059.6 437.1 L1058.2 437.1 L1057.3 420.1 L1056.4 426.2 L1054.8 424.9 L1053.2 423.5 L1051.4 420.8 L1049.6 423.5 L1048.0 427.6 L1046.4 432.4 L1044.6 431.7 L1043.4 422.2 L1042.6 434.4 L1041.2 439.8 L1039.6 441.9 L1037.8 441.2 L1036.5 432.4 L1035.5 437.1 L1034.4 435.8 L1033.3 426.9 L1032.4 437.1 L1031.0 446.6 L1029.7 450.7 L1028.7 464.3 L1027.3 468.4 L1026.0 468.4 L1024.9 450.7 L1024.2 475.2 L1022.8 479.3 L1021.5 480.7 L1020.1 482.7 L1019.2 461.6 L1018.4 432.4 L1017.4 434.4 L1015.6 437.1 L1014.3 442.6 L1012.6 443.9 L1011.0 438.5 L1009.7 429.0 L1008.3 431.7 L1006.5 427.6 L1004.8 437.1 L1003.1 441.2 L1001.1 442.6 L999.0 443.9 L997.7 435.8 L996.3 445.3 L994.3 446.0 L992.9 442.6 L991.6 437.1 L990.6 447.3 L989.3 446.6 L987.9 434.4 L986.5 418.8 L985.4 423.5 L983.8 428.3 L982.0 429.0 L981.1 420.1 L980.0 429.0 L978.6 428.3 L977.6 415.4 L975.9 412.0 L974.6 400.4 L972.5 405.2 L970.8 404.5 L969.1 409.9 L967.5 418.1 L965.7 423.5 L964.4 434.4 L963.0 442.6 L961.2 445.3 L959.6 438.5 L958.0 435.1 L956.6 429.6 L955.2 433.0 L953.9 431.7 L952.8 410.6 L951.7 414.0 L950.4 423.5 L949.0 438.5 L947.4 441.2 L946.0 434.4 L944.4 424.9 L942.7 423.5 L941.4 417.4 L940.0 416.7 L939.3 427.6 L938.0 443.9 L935.9 440.5 L934.3 449.4 L932.9 458.2 L931.6 458.9 L930.5 468.4 L929.4 474.5 L928.1 471.1 L926.4 461.6 L925.1 437.1 L924.0 409.9 L922.9 401.8 L922.1 407.2 L921.0 429.0 L919.6 448.0 L918.3 463.0 L916.6 466.4 L914.9 465.0 L913.5 460.9 L912.1 452.1 L910.1 449.4 L908.7 437.1 L907.4 418.1 L906.0 414.0 L904.0 412.0 L902.6 405.2 L901.7 411.3 L900.3 413.3 L898.5 416.0 L897.2 410.6 L895.8 420.8 L894.5 418.8 L892.7 419.4 L891.3 432.4 L890.0 431.7 L889.0 424.2 L887.2 426.9 L885.6 425.6 L884.0 424.2 L882.2 420.8 L880.9 422.2 L879.5 426.2 L877.7 430.3 L876.1 431.0 L874.7 437.1 L873.1 448.0 L871.7 463.0 L870.4 467.7 L869.0 456.2 L867.9 431.7 L867.3 408.6 L865.9 420.8 L863.9 421.5 L862.2 424.2 L860.5 422.2 L858.7 417.4 L857.1 418.1 L855.7 419.4 L854.3 429.0 L852.7 428.3 L851.3 423.5 L850.3 407.2 L848.9 402.4 L847.3 400.4 L845.5 397.7 L844.1 405.8 L842.8 416.0 L841.0 419.4 L839.4 422.2 L838.0 427.6 L836.9 432.4 L835.3 427.6 L833.9 423.5 L833.2 434.4 L832.3 444.6 L830.9 439.8 L829.6 424.9 L828.5 410.6 L826.9 414.7 L825.1 415.4 L823.3 411.3 L821.7 405.8 L820.3 405.2 L818.3 409.2 L816.9 405.8 L815.6 412.6 L814.6 445.3 L813.8 461.3 L812.8 458.9 L812.2 431.7 L811.5 401.8 L810.1 392.0 L808.1 395.6 L806.5 397.0 L805.1 392.2 L803.3 396.3 L801.6 397.7 L800.2 394.3 L799.2 397.7 L797.9 405.8 L796.5 419.4 L795.2 427.6 L793.4 431.0 L792.4 420.8 L791.5 405.2 L789.0 409.2 L787.0 411.3 L785.6 424.2 L784.3 423.5 L783.3 407.2 L782.0 419.4 L780.2 426.2 L778.4 428.3 L776.5 431.0 L774.8 427.6 L773.0 416.7 L771.6 407.9 L770.0 412.6 L768.1 411.3 L766.5 403.8 L764.7 418.1 L762.7 420.8 L761.3 412.0 L759.7 416.7 L758.3 426.2 L756.5 420.8 L754.5 411.3 L752.9 405.2 L751.5 409.2 L749.7 415.4 L747.7 420.8 L746.1 411.3 L744.3 419.4 L742.3 422.2 L740.6 416.7 L739.3 441.2 L737.9 459.6 L736.1 450.7 L734.8 439.8 L733.4 431.7 L732.1 426.9 L730.7 430.3 L729.3 438.5 L727.6 448.0 L725.9 438.5 L724.3 454.8 L722.5 450.7 L720.8 465.0 L719.4 452.1 L718.5 470.5 L717.1 471.1 L715.3 464.3 L714.0 457.5 L712.3 463.0 L710.3 458.9 L708.9 452.1 L707.2 458.2 L705.8 448.0 L704.2 437.1 L703.1 449.4 L701.5 450.0 L699.8 448.0 L698.1 450.7 L696.7 443.9 L695.7 428.3 L694.0 448.0 L692.6 433.7 L690.8 439.8 L689.2 443.9 L687.2 446.6 L685.4 439.2 L683.8 446.0 L682.4 435.1 L680.4 435.8 L679.0 448.0 L677.2 439.2 L675.3 443.2 L674.0 437.1 L672.9 446.6 L671.3 449.4 L669.9 445.3 L668.5 424.9 L667.4 401.8 L665.4 405.2 L663.6 402.4 L663.1 446.6 L662.0 448.0 L660.9 422.2 L659.3 426.2 L657.7 435.8 L655.9 440.5 L653.8 441.2 L651.8 438.5 L650.4 448.0 L649.1 467.1 L648.1 480.7 L646.8 481.3 L645.7 469.1 L645.0 480.7 L643.6 481.3 L641.9 477.9 L640.5 458.9 L639.6 431.7 L638.6 407.2 L636.8 409.9 L635.5 424.9 L634.1 431.0 L632.8 427.6 L631.4 433.0 L629.6 443.9 L628.3 456.2 L627.3 469.8 L626.0 464.3 L624.6 450.7 L623.2 434.4 L621.9 414.0 L620.5 416.7 L618.8 409.9 L616.9 411.3 L615.8 431.7 L614.7 450.7 L613.7 463.0 L612.0 465.0 L610.1 467.1 L608.3 471.1 L606.2 464.3 L604.6 456.2 L602.8 434.4 L601.5 415.4 L600.1 409.2 L597.4 412.6 L595.4 409.2 L594.0 414.0 L592.1 414.7 L590.5 415.4 L588.7 420.1 L586.9 423.5 L586.1 456.2 L585.3 463.0 L584.2 450.7 L583.5 429.0 L582.6 434.4 L580.5 432.4 L578.5 432.4 L576.5 429.6 L574.7 434.4 L573.3 431.0 L571.7 427.6 L570.1 442.6 L568.3 446.6 L566.9 469.8 L566.0 484.7 L564.9 486.1 L563.9 468.4 L563.3 437.1 L562.5 411.3 L561.5 405.2 L559.9 412.6 L558.5 406.5 L557.6 419.4 L556.5 422.8 L554.7 416.7 L553.3 405.8 L551.7 400.4 L549.9 412.6 L548.3 424.9 L546.9 433.0 L545.9 431.7 L544.9 411.3 L543.8 395.0 L542.5 401.1 L541.1 404.5 L539.1 405.2 L537.0 406.5 L535.2 405.8 L533.6 409.9 L532.3 418.8 L530.9 419.4 L528.9 415.4 L527.5 405.2 L526.1 410.6 L524.8 397.0 L523.4 401.1 L520.7 400.4 L518.7 396.3 L516.6 392.9 L514.8 394.3 L513.2 397.0 L511.6 392.9 L510.8 427.6 L509.8 439.6 L508.9 437.1 L508.0 407.2 L507.1 391.6 L505.1 394.3 L503.0 396.3 L501.4 392.2 L499.6 400.4 L497.6 405.2 L495.5 409.2 L493.6 412.6 L492.5 423.5 L491.4 431.0 L490.1 429.0 L488.7 420.8 L487.4 409.9 L486.0 398.4 L484.6 412.6 L483.0 412.0 L481.7 406.5 L480.3 409.9 L479.2 401.8 L477.4 414.0 L475.8 423.5 L474.4 427.6 L473.1 426.2 L471.7 416.7 L470.4 404.5 L468.6 393.6 L466.3 393.6 L464.2 397.7 L462.2 400.4 L460.8 396.3 L459.5 398.4 L458.5 404.5 L456.8 406.5 L454.7 407.9 L452.7 410.6 L451.3 407.2 L449.6 401.8 L447.7 394.3 L445.9 398.4 L443.8 395.0 L442.2 392.9 L439.8 397.0 L437.0 397.7 L435.7 400.4 L434.3 407.9 L433.2 404.5 L432.3 395.0 L430.9 390.2 L428.2 386.8 L426.2 386.1 L420.4 386.1 Z"/><path id="w2" d="M420.4 681.9 L425.5 681.6 L427.5 678.2 L430.9 676.2 L432.7 669.4 L434.1 663.9 L435.7 666.0 L437.7 663.3 L439.8 662.6 L441.1 659.9 L442.8 663.3 L444.5 659.9 L445.9 658.5 L447.7 663.3 L449.6 664.6 L451.3 661.9 L453.1 658.5 L454.5 650.3 L455.8 643.5 L457.7 643.5 L459.1 657.1 L460.4 650.3 L462.2 653.1 L464.0 659.9 L465.9 663.9 L467.2 657.1 L469.0 658.5 L470.4 647.6 L471.7 640.1 L473.1 638.1 L474.4 644.9 L476.2 649.0 L477.8 651.7 L479.5 658.5 L481.2 655.1 L482.6 661.2 L484.4 653.1 L485.7 660.5 L487.4 659.9 L489.0 666.7 L490.1 661.2 L491.2 650.3 L492.5 643.5 L494.4 643.5 L495.8 647.6 L496.9 654.4 L498.0 661.2 L499.6 656.5 L501.2 657.1 L503.0 663.9 L505.1 659.9 L506.7 660.5 L508.5 663.9 L509.8 658.5 L511.2 653.7 L512.9 657.1 L514.6 657.1 L516.2 663.3 L518.0 663.3 L520.0 659.2 L521.4 662.6 L522.7 653.7 L524.4 655.8 L526.1 661.2 L527.1 650.3 L528.4 642.2 L529.8 640.1 L531.2 644.9 L532.9 653.1 L534.7 654.4 L536.3 648.3 L537.7 661.2 L539.3 657.1 L541.1 658.5 L542.9 661.2 L544.8 666.0 L546.1 654.4 L548.3 651.7 L549.9 657.1 L551.6 659.9 L553.3 662.6 L555.1 657.8 L556.5 661.2 L558.1 654.4 L560.1 650.3 L561.5 661.2 L562.5 647.6 L563.5 620.4 L564.6 603.4 L566.0 603.4 L566.9 623.1 L567.9 653.1 L569.7 650.3 L571.7 648.3 L573.3 656.5 L575.1 653.7 L576.5 666.7 L578.2 668.0 L580.1 672.1 L581.5 669.4 L582.3 647.6 L583.3 629.2 L585.0 626.5 L586.7 631.3 L588.3 645.6 L590.1 636.7 L591.8 647.6 L594.0 647.6 L595.6 644.9 L597.0 650.3 L598.8 655.1 L600.5 655.1 L602.2 655.1 L603.2 642.2 L604.6 625.8 L606.0 620.4 L607.3 609.5 L608.7 598.6 L610.3 591.2 L611.7 604.1 L612.4 613.6 L613.7 602.7 L614.7 617.7 L615.5 636.7 L616.4 650.3 L617.4 657.8 L619.2 654.4 L620.9 650.3 L622.3 642.2 L623.7 631.3 L625.3 620.4 L626.9 612.9 L628.7 620.4 L630.0 627.2 L631.8 634.0 L633.2 644.9 L634.1 652.4 L635.9 647.6 L637.3 643.5 L638.2 653.1 L639.2 657.1 L640.0 636.7 L640.9 621.1 L642.7 610.9 L644.1 600.7 L645.7 597.0 L647.3 599.3 L648.7 608.2 L650.0 619.0 L651.8 627.2 L653.6 634.0 L655.2 638.1 L657.2 638.8 L659.0 647.6 L660.6 638.1 L662.0 650.3 L663.6 648.3 L665.4 653.1 L666.8 657.1 L667.7 660.5 L668.8 647.6 L670.2 635.4 L671.8 624.5 L673.6 619.7 L675.3 619.0 L676.7 625.8 L677.7 635.4 L679.0 624.5 L680.4 629.9 L681.7 635.4 L683.5 639.4 L685.4 643.5 L687.6 647.6 L689.2 654.4 L690.8 650.3 L692.6 655.1 L694.4 648.3 L696.0 657.8 L697.4 643.5 L699.0 646.3 L700.8 644.2 L702.5 640.1 L703.9 649.0 L705.3 643.5 L706.2 631.3 L707.6 615.0 L708.9 604.1 L709.9 602.7 L711.0 613.6 L712.1 625.8 L713.4 629.9 L714.8 627.2 L716.1 630.6 L716.8 613.6 L717.8 600.0 L718.9 610.9 L719.8 625.8 L721.2 636.7 L722.5 643.5 L723.9 647.6 L724.8 652.4 L726.2 646.9 L728.0 650.3 L729.3 654.4 L731.1 659.9 L732.7 656.5 L734.8 655.8 L736.1 625.8 L737.5 624.5 L739.3 627.2 L740.9 636.7 L742.5 644.9 L743.6 653.1 L744.7 659.2 L746.3 650.3 L748.0 646.9 L749.7 654.4 L751.5 660.5 L753.1 657.1 L754.8 663.3 L756.5 660.5 L758.3 663.9 L759.3 647.6 L760.6 642.8 L762.0 642.2 L762.9 659.2 L764.7 659.2 L766.5 658.5 L768.1 657.1 L769.5 666.7 L770.0 659.9 L771.4 668.0 L773.0 663.9 L774.4 650.3 L775.7 636.7 L777.5 635.1 L778.8 636.7 L779.8 649.0 L781.6 654.4 L783.3 659.9 L784.7 650.3 L786.3 659.9 L788.0 648.3 L789.7 661.2 L791.5 653.7 L793.1 663.3 L794.8 659.2 L796.5 661.2 L798.6 662.6 L800.2 659.9 L802.0 657.1 L803.7 659.9 L805.4 663.3 L806.7 658.5 L807.8 665.3 L808.8 673.5 L810.5 670.7 L811.9 661.2 L813.3 653.1 L815.2 650.3 L816.5 661.9 L818.3 661.9 L820.3 661.9 L822.4 661.2 L823.7 657.1 L825.1 655.1 L826.9 658.5 L828.5 658.5 L829.8 659.9 L830.5 644.9 L831.5 633.3 L832.8 635.4 L834.2 639.4 L835.6 646.9 L837.3 643.5 L838.7 650.3 L840.5 657.1 L842.1 655.8 L843.7 651.7 L845.1 663.3 L846.8 662.6 L848.6 667.3 L849.6 654.4 L850.5 650.3 L851.9 655.8 L853.7 661.2 L855.4 657.1 L857.1 659.9 L859.1 659.9 L860.5 654.4 L862.2 653.7 L863.9 650.3 L865.5 651.0 L866.8 655.1 L867.7 634.0 L868.6 616.3 L870.0 608.8 L871.3 608.8 L872.0 631.3 L872.7 647.6 L873.6 641.5 L875.4 643.5 L876.8 653.1 L878.1 658.5 L879.5 654.4 L881.3 651.7 L882.2 658.5 L883.6 664.6 L884.9 662.6 L886.3 661.9 L887.2 666.0 L888.1 642.2 L889.0 627.9 L890.4 634.0 L891.7 640.8 L893.8 641.5 L895.8 644.9 L897.9 647.6 L899.5 646.9 L900.8 658.5 L902.6 654.4 L904.4 657.1 L905.7 651.7 L907.4 655.8 L908.7 647.6 L910.1 636.7 L911.5 625.8 L913.5 624.5 L914.9 610.9 L916.2 606.8 L918.0 609.5 L919.3 623.1 L920.7 639.4 L921.7 651.7 L923.0 659.2 L924.8 655.8 L925.7 636.7 L926.7 609.5 L927.8 600.0 L929.4 594.6 L930.5 609.5 L931.6 625.8 L933.2 626.5 L934.9 625.8 L936.2 623.1 L937.6 628.6 L938.9 639.4 L940.7 646.3 L942.5 651.0 L944.1 647.6 L946.0 642.2 L947.4 646.3 L949.0 638.1 L950.8 640.1 L952.1 651.7 L953.5 650.3 L954.4 635.4 L956.2 633.3 L958.0 636.7 L959.6 633.3 L961.2 632.0 L963.0 632.0 L964.4 645.6 L966.1 642.2 L967.8 645.6 L969.4 653.1 L971.2 660.5 L972.9 655.8 L974.6 654.4 L975.9 642.2 L977.6 644.2 L979.3 646.9 L981.1 647.6 L982.5 640.1 L984.4 640.1 L986.1 640.8 L987.9 645.6 L989.5 641.5 L991.2 636.7 L992.9 634.0 L994.7 636.0 L996.6 637.4 L998.0 643.5 L999.7 649.0 L1001.1 638.8 L1002.4 645.6 L1004.2 644.9 L1005.6 651.0 L1006.9 655.1 L1008.6 652.4 L1010.2 651.0 L1012.0 650.3 L1013.3 646.9 L1014.7 651.0 L1016.5 650.3 L1017.8 639.4 L1018.8 620.4 L1019.4 603.4 L1020.8 603.4 L1021.5 620.4 L1022.4 635.4 L1023.8 636.7 L1025.2 643.5 L1026.9 644.2 L1028.7 649.0 L1030.3 653.1 L1032.0 655.8 L1033.7 654.4 L1035.1 652.4 L1036.5 656.5 L1038.2 660.5 L1039.2 644.9 L1040.1 635.4 L1041.5 641.5 L1043.3 642.2 L1044.6 638.8 L1046.0 638.8 L1046.9 650.3 L1048.7 646.9 L1050.5 646.9 L1052.1 650.3 L1053.7 653.1 L1055.5 650.3 L1056.9 654.4 L1058.2 646.3 L1059.6 634.0 L1060.9 633.3 L1062.3 640.1 L1064.1 640.8 L1065.4 652.4 L1066.8 642.2 L1068.1 651.0 L1069.8 643.5 L1070.9 647.6 L1071.8 665.3 L1073.6 663.3 L1075.2 662.6 L1076.8 661.2 L1077.9 651.7 L1079.3 650.3 L1080.9 654.4 L1082.7 658.5 L1084.5 661.9 L1086.1 663.9 L1087.5 667.3 L1089.1 662.6 L1090.9 666.0 L1092.6 668.7 L1094.3 668.7 L1095.6 662.6 L1097.3 658.5 L1098.6 663.9 L1100.0 668.7 L1102.1 666.0 L1103.8 670.1 L1105.8 673.5 L1107.9 676.2 L1109.9 676.9 L1111.9 678.9 L1114.7 681.6 L1120.1 681.9 L1120.1 681.7 L1114.7 681.4 L1112.2 680.8 L1109.9 682.8 L1107.9 684.8 L1105.8 686.9 L1103.8 688.9 L1101.7 691.6 L1100.4 687.6 L1098.6 694.4 L1097.0 697.8 L1095.3 699.8 L1094.0 690.3 L1092.6 696.4 L1090.9 697.8 L1088.8 700.5 L1087.2 699.8 L1085.4 707.3 L1083.6 714.1 L1082.0 716.1 L1080.4 712.7 L1078.6 707.3 L1076.8 711.4 L1075.2 703.9 L1073.6 709.3 L1072.2 700.5 L1070.5 708.0 L1069.1 703.9 L1067.1 708.6 L1065.4 718.2 L1064.1 715.4 L1063.2 727.7 L1062.3 738.6 L1061.3 737.2 L1060.0 727.7 L1058.2 726.3 L1057.3 714.1 L1055.1 720.9 L1053.5 717.5 L1051.8 718.2 L1050.1 730.4 L1048.3 722.9 L1046.7 729.0 L1045.3 724.3 L1043.7 729.7 L1041.5 730.4 L1039.9 726.3 L1038.5 712.7 L1036.9 715.4 L1035.1 708.6 L1034.1 710.7 L1032.4 715.4 L1030.3 718.2 L1028.7 714.8 L1027.3 725.0 L1025.6 727.7 L1023.5 730.4 L1021.9 733.1 L1021.1 763.1 L1020.1 777.3 L1018.8 763.1 L1017.8 730.4 L1016.7 708.6 L1015.6 716.8 L1014.0 718.2 L1012.0 720.9 L1009.9 722.9 L1008.3 716.8 L1006.5 712.0 L1005.6 719.5 L1004.2 731.1 L1002.9 731.8 L1001.1 726.3 L999.0 731.8 L997.0 734.5 L995.2 739.9 L993.9 749.4 L992.2 754.2 L990.6 752.2 L989.3 746.7 L987.9 730.4 L986.5 712.0 L984.8 727.7 L983.4 737.2 L982.0 730.4 L981.1 717.5 L979.3 722.9 L978.0 718.2 L976.2 710.0 L974.6 699.1 L972.9 708.6 L971.2 699.1 L969.4 710.0 L968.0 728.4 L967.1 720.9 L965.7 723.6 L964.4 741.3 L963.0 750.1 L961.2 750.8 L959.3 753.5 L958.0 742.6 L956.9 746.0 L955.5 744.0 L953.9 737.2 L952.8 719.5 L950.8 725.0 L949.4 742.0 L947.6 740.6 L946.0 735.8 L945.2 726.3 L944.1 730.4 L942.7 722.2 L941.1 718.2 L939.3 718.2 L938.0 739.9 L936.2 734.5 L935.3 744.0 L933.9 757.6 L932.5 759.0 L931.2 771.9 L929.4 769.9 L928.1 764.4 L927.1 759.7 L925.7 763.1 L925.1 737.2 L924.0 707.3 L922.6 701.2 L921.7 710.0 L920.3 733.1 L918.9 760.3 L918.0 776.7 L916.6 782.1 L915.3 780.7 L914.2 766.5 L912.5 767.1 L911.2 754.9 L909.8 733.1 L908.7 711.4 L907.6 702.5 L906.7 707.3 L905.7 714.1 L904.0 715.4 L902.6 704.6 L900.6 708.6 L898.5 708.6 L897.2 705.2 L895.8 716.8 L894.5 712.7 L893.1 708.6 L892.1 716.8 L890.8 727.7 L889.4 735.8 L888.1 727.7 L887.2 708.0 L885.6 711.4 L884.0 707.3 L882.2 703.2 L880.4 703.9 L878.8 706.6 L877.5 699.8 L875.4 699.8 L874.1 711.4 L872.7 716.8 L871.7 752.2 L870.7 762.4 L869.3 757.6 L867.9 739.9 L866.8 719.5 L866.0 702.5 L865.2 708.0 L863.6 708.6 L861.8 706.6 L860.5 697.8 L858.7 701.2 L857.1 702.5 L855.4 708.6 L854.1 697.8 L853.0 710.7 L851.3 715.4 L849.6 714.1 L848.6 696.4 L847.3 701.8 L845.5 697.8 L844.1 705.9 L842.1 710.7 L840.5 712.7 L838.7 708.6 L837.3 714.1 L836.0 725.0 L834.6 724.3 L833.4 716.1 L832.3 725.0 L831.2 723.6 L830.1 704.6 L828.8 708.0 L827.1 708.6 L825.5 712.0 L823.7 710.0 L822.0 703.2 L820.3 706.6 L818.7 703.9 L816.9 699.8 L815.6 708.6 L813.8 708.6 L812.2 707.3 L811.1 688.9 L809.7 688.9 L808.4 684.2 L807.0 691.0 L805.6 695.0 L803.7 698.4 L802.0 694.4 L801.0 699.8 L799.2 700.5 L797.2 700.5 L795.2 696.4 L793.4 701.2 L791.8 696.4 L790.1 697.1 L788.4 698.4 L786.3 695.0 L784.7 703.9 L782.9 699.8 L781.2 708.6 L779.5 716.8 L777.9 725.0 L776.1 727.0 L774.4 716.8 L773.0 699.1 L771.4 691.0 L770.0 696.4 L768.1 699.8 L766.1 703.2 L764.7 697.8 L763.3 701.2 L761.6 710.0 L759.7 705.9 L758.2 695.7 L756.5 704.6 L754.8 703.2 L753.1 698.4 L751.1 703.2 L749.3 702.5 L747.7 696.4 L745.7 705.9 L743.6 710.0 L742.3 716.8 L740.6 722.2 L739.3 733.1 L737.9 742.0 L736.8 733.1 L735.5 716.8 L734.1 712.7 L732.7 708.6 L730.7 706.6 L729.3 701.2 L727.3 707.3 L725.7 702.5 L723.9 710.0 L721.9 714.1 L720.5 722.2 L719.4 741.3 L718.5 759.0 L717.5 760.3 L716.1 749.4 L715.1 737.2 L714.0 734.5 L713.0 756.9 L711.7 756.3 L710.3 751.5 L708.5 753.5 L706.9 750.1 L705.5 738.6 L704.4 726.3 L703.5 734.5 L702.1 737.9 L700.4 735.8 L698.7 731.1 L697.1 733.1 L695.7 722.9 L693.6 728.4 L691.9 731.8 L690.3 733.1 L689.2 722.9 L687.9 733.1 L686.2 737.2 L684.9 751.5 L683.5 753.5 L682.1 746.7 L680.8 762.4 L679.0 757.6 L677.2 752.2 L675.6 749.4 L674.3 741.3 L672.9 752.2 L671.8 761.0 L670.4 761.7 L669.5 746.7 L668.5 720.9 L667.4 699.1 L666.1 707.3 L664.5 708.0 L663.4 716.8 L662.0 729.0 L660.4 731.8 L659.0 724.3 L658.2 734.5 L657.2 746.7 L655.9 736.5 L653.8 739.2 L652.2 741.3 L650.9 752.2 L649.8 765.8 L648.7 773.3 L647.7 769.9 L646.8 784.8 L645.7 790.5 L644.3 786.2 L643.0 779.4 L641.6 771.2 L640.5 763.1 L639.6 730.4 L638.9 702.5 L637.5 708.0 L635.9 705.2 L634.1 706.6 L633.2 727.7 L631.8 744.0 L630.5 757.6 L629.1 769.9 L627.3 769.9 L626.4 760.3 L625.0 741.3 L623.2 730.4 L621.9 716.8 L620.7 702.5 L619.6 705.2 L617.8 706.6 L616.4 716.8 L615.1 741.3 L614.1 766.5 L613.0 766.5 L612.0 759.7 L610.3 767.1 L608.7 773.9 L607.3 780.1 L606.0 773.9 L604.6 760.3 L603.2 741.3 L601.9 719.5 L600.8 706.6 L598.8 703.2 L597.0 708.6 L595.4 711.4 L594.0 703.2 L592.8 711.4 L590.7 714.8 L589.1 716.8 L587.3 720.9 L586.0 727.7 L584.6 734.5 L583.3 735.8 L582.6 716.8 L581.9 691.0 L580.5 692.3 L579.2 694.4 L577.1 696.4 L575.1 697.8 L573.3 702.5 L571.7 699.8 L570.3 703.2 L569.0 716.8 L567.9 730.4 L566.9 764.4 L566.0 783.5 L564.9 784.8 L564.2 764.4 L563.5 730.4 L562.9 708.0 L561.5 712.7 L559.7 706.6 L558.1 711.4 L556.7 710.0 L555.1 701.2 L553.3 706.6 L551.3 707.3 L549.3 709.3 L547.5 705.2 L545.9 707.3 L544.5 696.4 L542.5 697.8 L541.1 700.5 L539.1 703.9 L537.0 703.2 L535.0 706.6 L533.3 712.7 L531.6 711.4 L530.2 720.2 L528.9 719.5 L527.5 711.4 L526.1 699.1 L524.1 703.9 L522.1 703.2 L520.0 697.8 L518.4 699.1 L516.6 695.0 L514.8 699.8 L512.9 697.1 L511.2 701.8 L509.1 704.6 L507.8 693.0 L506.1 698.4 L504.4 700.5 L502.6 696.4 L501.0 702.5 L499.3 699.8 L497.6 701.2 L496.2 708.6 L494.8 718.2 L493.1 721.6 L491.7 718.2 L490.4 708.6 L489.4 696.4 L488.5 701.8 L486.7 703.9 L484.6 703.9 L483.0 712.0 L481.7 709.3 L479.9 705.9 L477.8 708.6 L475.8 710.0 L474.0 722.2 L472.4 722.9 L470.8 716.8 L469.4 705.2 L468.1 695.7 L466.3 699.1 L464.2 702.5 L462.2 705.9 L460.4 708.0 L458.8 699.8 L457.4 715.4 L456.1 720.2 L454.5 717.5 L453.1 708.6 L452.0 697.8 L450.0 699.8 L447.9 697.8 L445.9 696.4 L443.8 693.7 L442.2 697.8 L440.4 701.2 L438.7 698.4 L437.0 693.0 L434.3 693.0 L432.3 691.0 L430.2 686.9 L428.2 682.8 L426.2 682.1 L420.4 682.1 Z"/><path id="w3" d="M420.4 187.9 L426.2 187.9 L427.5 187.9 L430.9 187.9 L432.3 187.7 L433.6 187.1 L435.0 187.4 L437.0 187.7 L438.4 187.6 L440.4 187.8 L442.5 187.6 L444.5 187.7 L446.6 187.6 L448.6 187.5 L450.6 187.2 L452.7 187.1 L454.7 186.4 L456.5 186.3 L458.1 187.2 L459.5 187.4 L461.3 187.1 L463.6 187.3 L465.6 187.7 L467.6 187.6 L469.4 187.6 L471.0 186.8 L472.4 185.5 L474.2 184.2 L475.8 185.5 L476.8 186.4 L477.8 186.0 L479.5 187.5 L480.8 185.6 L482.6 186.4 L484.6 186.9 L486.7 187.5 L487.8 187.5 L488.7 185.5 L489.8 184.0 L491.4 183.5 L492.8 185.2 L494.2 186.4 L496.2 187.3 L497.6 187.8 L499.3 187.6 L501.7 187.7 L503.7 187.8 L505.7 187.8 L507.5 187.8 L508.5 186.2 L509.8 183.1 L511.2 186.2 L511.9 187.7 L513.2 187.6 L514.8 187.5 L516.6 187.7 L518.7 187.7 L520.7 187.5 L522.1 187.4 L523.4 187.6 L525.5 187.6 L526.8 187.1 L528.4 186.2 L529.8 185.5 L531.6 185.7 L533.2 185.2 L534.7 185.8 L536.3 185.5 L538.4 186.0 L540.1 185.7 L541.8 186.2 L543.1 186.9 L544.8 187.7 L545.9 186.4 L547.2 185.4 L548.6 185.1 L549.9 186.2 L551.3 186.9 L553.3 187.3 L554.7 186.5 L556.5 185.5 L558.1 185.7 L559.5 186.4 L560.8 187.1 L561.9 187.3 L563.3 187.1 L564.2 182.1 L564.9 177.3 L566.3 176.0 L567.6 176.1 L568.3 179.5 L569.0 182.1 L570.3 182.8 L571.7 183.6 L573.1 184.2 L574.7 183.5 L576.5 184.2 L577.8 183.5 L579.9 183.1 L581.6 183.6 L583.3 184.2 L585.0 183.5 L586.7 184.1 L588.7 184.5 L590.7 184.9 L592.8 185.3 L594.0 185.5 L595.4 185.9 L597.4 185.4 L598.8 185.3 L600.1 186.0 L601.5 184.2 L602.8 184.0 L603.8 184.9 L604.9 182.6 L606.2 182.5 L607.3 182.8 L608.7 181.0 L610.3 180.7 L612.0 179.9 L613.7 180.5 L614.7 182.4 L615.5 185.5 L617.1 185.5 L618.8 186.4 L620.1 185.5 L621.9 183.3 L623.7 181.7 L625.3 182.0 L627.3 181.6 L629.1 182.8 L630.7 182.4 L632.4 182.8 L634.1 183.5 L635.5 184.9 L637.3 186.0 L638.9 187.1 L639.8 183.8 L640.9 181.0 L642.3 180.6 L644.1 181.4 L645.7 180.7 L647.3 180.5 L648.8 181.2 L649.8 182.6 L650.9 184.5 L652.2 184.2 L653.8 184.6 L655.5 184.0 L656.8 185.4 L659.0 185.7 L659.7 183.5 L660.6 181.6 L662.0 182.4 L663.1 184.2 L664.5 186.2 L665.8 187.1 L667.2 185.5 L668.8 185.5 L670.4 185.4 L671.8 183.3 L673.6 183.1 L675.6 182.9 L677.0 183.8 L678.1 184.6 L679.4 184.4 L681.1 185.7 L682.4 185.4 L683.8 184.9 L685.4 185.4 L687.2 185.3 L689.2 186.0 L690.8 185.2 L692.6 184.9 L694.4 185.4 L696.0 186.0 L697.4 184.7 L698.7 184.6 L699.8 185.0 L700.8 183.3 L702.5 183.1 L703.9 183.8 L704.9 184.5 L706.2 183.5 L707.6 182.2 L709.3 182.0 L711.2 181.3 L713.0 181.6 L714.4 182.6 L715.7 181.5 L717.1 180.3 L718.5 179.0 L719.4 178.7 L720.5 179.3 L721.9 181.0 L723.2 181.4 L724.6 181.1 L726.2 182.4 L727.7 182.5 L729.3 183.1 L730.7 183.1 L732.1 183.8 L733.4 184.7 L734.8 184.5 L735.5 183.5 L737.1 180.3 L738.5 180.3 L739.3 182.4 L739.9 185.5 L741.6 185.4 L742.9 185.0 L744.7 186.7 L746.3 185.5 L748.0 184.9 L749.3 185.7 L751.5 186.5 L753.1 185.9 L754.8 185.3 L756.5 186.0 L758.2 186.2 L759.9 187.0 L761.6 187.1 L763.3 186.6 L764.7 186.3 L766.5 186.8 L768.1 187.1 L770.0 187.2 L771.4 187.3 L772.7 186.4 L774.1 184.9 L775.4 183.3 L776.8 182.9 L778.4 183.8 L779.8 184.9 L781.6 185.7 L783.3 185.1 L785.0 185.5 L786.6 186.2 L788.4 186.7 L790.1 186.1 L791.5 187.2 L792.4 185.5 L793.4 184.5 L795.2 184.8 L796.9 185.5 L797.9 187.1 L798.8 187.6 L800.2 187.2 L802.0 187.6 L804.0 187.7 L806.0 187.8 L808.1 187.9 L810.1 187.8 L811.1 187.1 L812.2 185.2 L813.5 184.2 L814.9 185.5 L816.2 186.8 L817.6 187.0 L819.2 186.9 L820.6 187.2 L822.4 186.8 L824.1 186.4 L825.5 186.2 L827.1 186.5 L828.5 186.4 L829.6 184.9 L830.5 182.4 L831.9 181.0 L832.8 182.1 L833.7 182.8 L835.3 181.6 L836.9 181.5 L838.7 182.2 L840.5 182.3 L841.4 184.2 L842.4 185.9 L844.1 186.8 L845.9 187.3 L847.3 187.5 L848.9 187.1 L850.3 185.9 L851.6 184.2 L853.7 183.8 L855.0 184.5 L856.8 185.5 L858.1 185.0 L859.5 183.7 L860.9 183.6 L862.2 185.3 L863.6 184.0 L864.9 185.2 L866.6 185.0 L867.3 182.1 L867.9 179.0 L869.0 178.5 L870.4 179.3 L872.0 180.2 L873.1 181.7 L874.5 182.8 L876.1 182.8 L877.5 182.5 L879.1 182.9 L880.4 183.8 L881.8 184.4 L883.6 184.7 L885.3 184.9 L887.0 185.2 L888.3 186.0 L889.4 185.9 L890.0 183.5 L890.8 182.1 L891.7 183.5 L892.7 185.5 L894.0 186.5 L895.8 186.0 L897.6 185.7 L899.2 186.1 L900.8 186.9 L902.6 186.4 L904.0 186.7 L905.7 185.7 L907.4 185.5 L909.0 185.2 L910.4 184.2 L912.1 182.6 L913.9 182.3 L915.5 182.2 L916.6 181.0 L917.6 180.3 L918.5 181.4 L919.6 183.5 L920.7 185.2 L922.1 186.5 L923.4 186.9 L924.8 186.2 L926.1 184.5 L927.5 182.1 L928.5 179.5 L929.4 178.9 L930.5 180.8 L931.6 182.8 L932.9 183.2 L934.6 182.6 L936.2 182.2 L937.6 183.3 L938.7 185.2 L940.0 186.5 L941.4 186.9 L943.0 186.4 L944.1 184.9 L945.5 183.5 L946.0 183.5 L947.4 183.8 L948.7 184.5 L950.1 185.7 L951.4 186.4 L953.1 186.3 L954.4 185.5 L955.8 184.7 L957.6 184.9 L959.3 185.5 L961.0 185.2 L962.3 185.0 L963.4 183.6 L964.8 182.9 L965.7 184.2 L966.7 185.9 L968.4 186.4 L969.8 186.1 L971.2 187.2 L972.5 186.7 L974.6 186.4 L976.2 185.7 L978.0 186.5 L979.7 185.9 L981.1 184.9 L982.7 185.3 L984.4 185.1 L986.1 185.7 L987.9 185.5 L989.5 185.3 L991.2 184.3 L992.9 183.6 L994.7 183.5 L996.1 182.5 L997.4 182.8 L998.4 184.2 L999.7 183.3 L1001.5 183.1 L1002.9 184.3 L1004.5 183.4 L1006.1 183.6 L1007.9 184.3 L1009.7 184.5 L1011.3 184.2 L1012.9 185.1 L1014.7 184.0 L1016.0 184.2 L1017.0 184.9 L1018.4 185.7 L1019.2 180.3 L1020.1 177.7 L1021.1 178.7 L1022.2 180.2 L1023.8 181.0 L1025.2 181.9 L1026.5 182.8 L1027.9 183.3 L1029.7 183.8 L1031.4 184.5 L1033.1 184.1 L1034.7 184.4 L1036.5 183.8 L1038.2 184.6 L1039.2 182.1 L1040.1 180.3 L1041.2 182.1 L1042.3 184.0 L1043.4 182.9 L1044.6 183.5 L1045.6 184.6 L1047.3 184.7 L1048.7 184.2 L1050.5 184.8 L1052.1 184.9 L1053.7 185.3 L1055.5 184.7 L1057.3 185.1 L1058.9 184.9 L1060.5 184.7 L1061.9 185.5 L1063.0 183.8 L1063.8 183.5 L1064.6 184.9 L1065.7 186.4 L1067.3 186.9 L1069.1 187.0 L1070.9 187.1 L1072.5 187.2 L1073.9 186.8 L1075.5 187.1 L1077.3 187.4 L1078.2 186.2 L1079.3 183.5 L1080.7 182.2 L1081.7 183.8 L1082.7 185.5 L1084.1 186.4 L1085.4 186.9 L1087.2 186.4 L1088.8 185.9 L1090.2 186.5 L1091.5 187.1 L1093.6 187.2 L1094.9 186.5 L1096.3 186.2 L1098.1 186.5 L1099.7 187.3 L1101.3 187.7 L1103.5 187.6 L1105.1 187.8 L1107.2 187.9 L1109.2 187.9 L1111.3 187.9 L1113.3 187.9 L1115.3 187.9 L1120.1 187.9 L1120.1 187.9 L1114.7 187.9 L1112.6 187.9 L1110.6 187.9 L1108.5 187.9 L1106.5 187.9 L1104.5 188.0 L1102.4 188.1 L1100.8 188.0 L1099.4 188.3 L1097.7 189.1 L1096.3 189.8 L1094.9 189.6 L1094.0 188.3 L1092.2 188.9 L1090.9 188.5 L1089.5 189.2 L1088.1 188.8 L1086.8 189.4 L1085.4 189.9 L1083.6 190.2 L1082.0 190.4 L1080.7 190.0 L1079.6 192.2 L1078.6 192.5 L1077.7 191.1 L1076.6 189.0 L1075.2 188.7 L1073.6 189.1 L1071.8 188.7 L1070.0 188.8 L1068.4 188.6 L1066.4 189.0 L1065.0 190.4 L1063.7 191.5 L1061.9 191.7 L1060.5 191.3 L1059.6 192.5 L1058.2 192.5 L1057.3 190.3 L1056.4 191.1 L1054.8 190.9 L1053.2 190.8 L1051.4 190.4 L1049.6 190.8 L1048.0 191.3 L1046.4 191.9 L1044.6 191.8 L1043.4 190.6 L1042.6 192.2 L1041.2 192.9 L1039.6 193.1 L1037.8 193.0 L1036.5 191.9 L1035.5 192.5 L1034.4 192.3 L1033.3 191.2 L1032.4 192.5 L1031.0 193.7 L1029.7 194.2 L1028.7 196.0 L1027.3 196.5 L1026.0 196.5 L1024.9 194.2 L1024.2 197.3 L1022.8 197.8 L1021.5 198.0 L1020.1 198.2 L1019.2 195.6 L1018.4 191.9 L1017.4 192.2 L1015.6 192.5 L1014.3 193.2 L1012.6 193.4 L1011.0 192.7 L1009.7 191.5 L1008.3 191.8 L1006.5 191.3 L1004.8 192.5 L1003.1 193.0 L1001.1 193.2 L999.0 193.4 L997.7 192.3 L996.3 193.6 L994.3 193.6 L992.9 193.2 L991.6 192.5 L990.6 193.8 L989.3 193.7 L987.9 192.2 L986.5 190.2 L985.4 190.8 L983.8 191.4 L982.0 191.5 L981.1 190.3 L980.0 191.5 L978.6 191.4 L977.6 189.7 L975.9 189.4 L974.6 188.3 L972.5 188.7 L970.8 188.6 L969.1 189.1 L967.5 190.1 L965.7 190.8 L964.4 192.2 L963.0 193.2 L961.2 193.6 L959.6 192.7 L958.0 192.2 L956.6 191.5 L955.2 192.0 L953.9 191.8 L952.8 189.2 L951.7 189.6 L950.4 190.8 L949.0 192.7 L947.4 193.0 L946.0 192.2 L944.4 190.9 L942.7 190.8 L941.4 190.0 L940.0 189.9 L939.3 191.3 L938.0 193.4 L935.9 192.9 L934.3 194.1 L932.9 195.2 L931.6 195.3 L930.5 196.5 L929.4 197.2 L928.1 196.8 L926.4 195.6 L925.1 192.5 L924.0 189.1 L922.9 188.4 L922.1 188.8 L921.0 191.5 L919.6 193.9 L918.3 195.8 L916.6 196.2 L914.9 196.0 L913.5 195.5 L912.1 194.4 L910.1 194.1 L908.7 192.5 L907.4 190.1 L906.0 189.6 L904.0 189.4 L902.6 188.7 L901.7 189.3 L900.3 189.5 L898.5 189.8 L897.2 189.2 L895.8 190.4 L894.5 190.2 L892.7 190.2 L891.3 191.9 L890.0 191.8 L889.0 190.8 L887.2 191.2 L885.6 191.0 L884.0 190.8 L882.2 190.4 L880.9 190.6 L879.5 191.1 L877.7 191.6 L876.1 191.7 L874.7 192.5 L873.1 193.9 L871.7 195.8 L870.4 196.4 L869.0 194.9 L867.9 191.8 L867.3 189.0 L865.9 190.4 L863.9 190.5 L862.2 190.8 L860.5 190.6 L858.7 190.0 L857.1 190.1 L855.7 190.2 L854.3 191.5 L852.7 191.4 L851.3 190.8 L850.3 188.8 L848.9 188.4 L847.3 188.3 L845.5 188.1 L844.1 188.7 L842.8 189.8 L841.0 190.2 L839.4 190.6 L838.0 191.3 L836.9 191.9 L835.3 191.3 L833.9 190.8 L833.2 192.2 L832.3 193.5 L830.9 192.9 L829.6 190.9 L828.5 189.2 L826.9 189.7 L825.1 189.7 L823.3 189.3 L821.7 188.7 L820.3 188.7 L818.3 189.1 L816.9 188.7 L815.6 189.4 L814.6 193.6 L813.8 195.6 L812.8 195.3 L812.2 191.8 L811.5 188.4 L810.1 187.9 L808.1 188.0 L806.5 188.1 L805.1 187.9 L803.3 188.1 L801.6 188.1 L800.2 188.0 L799.2 188.1 L797.9 188.7 L796.5 190.2 L795.2 191.3 L793.4 191.7 L792.4 190.4 L791.5 188.7 L789.0 189.1 L787.0 189.3 L785.6 190.8 L784.3 190.8 L783.3 188.8 L782.0 190.2 L780.2 191.1 L778.4 191.4 L776.5 191.7 L774.8 191.3 L773.0 189.9 L771.6 188.9 L770.0 189.4 L768.1 189.3 L766.5 188.5 L764.7 190.1 L762.7 190.4 L761.3 189.4 L759.7 189.9 L758.3 191.1 L756.5 190.4 L754.5 189.3 L752.9 188.7 L751.5 189.1 L749.7 189.7 L747.7 190.4 L746.1 189.3 L744.3 190.2 L742.3 190.6 L740.6 189.9 L739.3 193.0 L737.9 195.4 L736.1 194.2 L734.8 192.9 L733.4 191.8 L732.1 191.2 L730.7 191.6 L729.3 192.7 L727.6 193.9 L725.9 192.7 L724.3 194.8 L722.5 194.2 L720.8 196.0 L719.4 194.4 L718.5 196.7 L717.1 196.8 L715.3 196.0 L714.0 195.1 L712.3 195.8 L710.3 195.3 L708.9 194.4 L707.2 195.2 L705.8 193.9 L704.2 192.5 L703.1 194.1 L701.5 194.2 L699.8 193.9 L698.1 194.2 L696.7 193.4 L695.7 191.4 L694.0 193.9 L692.6 192.1 L690.8 192.9 L689.2 193.4 L687.2 193.7 L685.4 192.8 L683.8 193.6 L682.4 192.2 L680.4 192.3 L679.0 193.9 L677.2 192.8 L675.3 193.3 L674.0 192.5 L672.9 193.7 L671.3 194.1 L669.9 193.6 L668.5 190.9 L667.4 188.4 L665.4 188.7 L663.6 188.4 L663.1 193.7 L662.0 193.9 L660.9 190.6 L659.3 191.1 L657.7 192.3 L655.9 192.9 L653.8 193.0 L651.8 192.7 L650.4 193.9 L649.1 196.3 L648.1 198.0 L646.8 198.0 L645.7 196.5 L645.0 198.0 L643.6 198.0 L641.9 197.6 L640.5 195.3 L639.6 191.8 L638.6 188.8 L636.8 189.1 L635.5 190.9 L634.1 191.7 L632.8 191.3 L631.4 192.0 L629.6 193.4 L628.3 194.9 L627.3 196.6 L626.0 196.0 L624.6 194.2 L623.2 192.2 L621.9 189.6 L620.5 189.9 L618.8 189.1 L616.9 189.3 L615.8 191.8 L614.7 194.2 L613.7 195.8 L612.0 196.0 L610.1 196.3 L608.3 196.8 L606.2 196.0 L604.6 194.9 L602.8 192.2 L601.5 189.7 L600.1 189.1 L597.4 189.4 L595.4 189.1 L594.0 189.6 L592.1 189.7 L590.5 189.7 L588.7 190.3 L586.9 190.8 L586.1 194.9 L585.3 195.8 L584.2 194.2 L583.5 191.5 L582.6 192.2 L580.5 191.9 L578.5 191.9 L576.5 191.5 L574.7 192.2 L573.3 191.7 L571.7 191.3 L570.1 193.2 L568.3 193.7 L566.9 196.6 L566.0 198.5 L564.9 198.6 L563.9 196.5 L563.3 192.5 L562.5 189.3 L561.5 188.7 L559.9 189.4 L558.5 188.8 L557.6 190.2 L556.5 190.7 L554.7 189.9 L553.3 188.7 L551.7 188.3 L549.9 189.4 L548.3 190.9 L546.9 192.0 L545.9 191.8 L544.9 189.3 L543.8 188.0 L542.5 188.3 L541.1 188.6 L539.1 188.7 L537.0 188.8 L535.2 188.7 L533.6 189.1 L532.3 190.2 L530.9 190.2 L528.9 189.7 L527.5 188.7 L526.1 189.2 L524.8 188.1 L523.4 188.3 L520.7 188.3 L518.7 188.1 L516.6 188.0 L514.8 188.0 L513.2 188.1 L511.6 188.0 L510.8 191.3 L509.8 192.8 L508.9 192.5 L508.0 188.8 L507.1 187.9 L505.1 188.0 L503.0 188.1 L501.4 187.9 L499.6 188.3 L497.6 188.7 L495.5 189.1 L493.6 189.4 L492.5 190.8 L491.4 191.7 L490.1 191.5 L488.7 190.4 L487.4 189.1 L486.0 188.2 L484.6 189.4 L483.0 189.4 L481.7 188.8 L480.3 189.1 L479.2 188.4 L477.4 189.6 L475.8 190.8 L474.4 191.3 L473.1 191.1 L471.7 189.9 L470.4 188.6 L468.6 188.0 L466.3 188.0 L464.2 188.1 L462.2 188.3 L460.8 188.1 L459.5 188.2 L458.5 188.6 L456.8 188.8 L454.7 188.9 L452.7 189.2 L451.3 188.8 L449.6 188.4 L447.7 188.0 L445.9 188.2 L443.8 188.0 L442.2 188.0 L439.8 188.1 L437.0 188.1 L435.7 188.3 L434.3 188.9 L433.2 188.6 L432.3 188.0 L430.9 187.9 L428.2 187.9 L426.2 187.9 L420.4 187.9 Z"/><path id="w4" d="M420.4 221.5 L425.5 221.5 L427.5 221.5 L430.9 221.5 L432.7 221.3 L434.1 220.9 L435.7 221.0 L437.7 220.8 L439.8 220.8 L441.1 220.5 L442.8 220.8 L444.5 220.5 L445.9 220.4 L447.7 220.8 L449.6 220.9 L451.3 220.7 L453.1 220.4 L454.5 219.4 L455.8 218.6 L457.7 218.6 L459.1 220.2 L460.4 219.4 L462.2 219.8 L464.0 220.5 L465.9 220.9 L467.2 220.2 L469.0 220.4 L470.4 219.1 L471.7 218.2 L473.1 217.9 L474.4 218.8 L476.2 219.3 L477.8 219.6 L479.5 220.4 L481.2 220.0 L482.6 220.6 L484.4 219.8 L485.7 220.6 L487.4 220.5 L489.0 221.1 L490.1 220.6 L491.2 219.4 L492.5 218.6 L494.4 218.6 L495.8 219.1 L496.9 219.9 L498.0 220.6 L499.6 220.2 L501.2 220.2 L503.0 220.9 L505.1 220.5 L506.7 220.6 L508.5 220.9 L509.8 220.4 L511.2 219.9 L512.9 220.2 L514.6 220.2 L516.2 220.8 L518.0 220.8 L520.0 220.4 L521.4 220.8 L522.7 219.9 L524.4 220.1 L526.1 220.6 L527.1 219.4 L528.4 218.4 L529.8 218.2 L531.2 218.8 L532.9 219.8 L534.7 219.9 L536.3 219.2 L537.7 220.6 L539.3 220.2 L541.1 220.4 L542.9 220.6 L544.8 221.0 L546.1 219.9 L548.3 219.6 L549.9 220.2 L551.6 220.5 L553.3 220.8 L555.1 220.3 L556.5 220.6 L558.1 219.9 L560.1 219.4 L561.5 220.6 L562.5 219.1 L563.5 215.6 L564.6 213.5 L566.0 213.5 L566.9 216.0 L567.9 219.8 L569.7 219.4 L571.7 219.2 L573.3 220.2 L575.1 219.9 L576.5 221.1 L578.2 221.2 L580.1 221.4 L581.5 221.3 L582.3 219.1 L583.3 216.8 L585.0 216.4 L586.7 217.0 L588.3 218.9 L590.1 217.7 L591.8 219.1 L594.0 219.1 L595.6 218.8 L597.0 219.4 L598.8 220.0 L600.5 220.0 L602.2 220.0 L603.2 218.4 L604.6 216.3 L606.0 215.6 L607.3 214.3 L608.7 212.9 L610.3 212.0 L611.7 213.6 L612.4 214.8 L613.7 213.4 L614.7 215.3 L615.5 217.7 L616.4 219.4 L617.4 220.3 L619.2 219.9 L620.9 219.4 L622.3 218.4 L623.7 217.0 L625.3 215.6 L626.9 214.7 L628.7 215.6 L630.0 216.5 L631.8 217.4 L633.2 218.8 L634.1 219.7 L635.9 219.1 L637.3 218.6 L638.2 219.8 L639.2 220.2 L640.0 217.7 L640.9 215.7 L642.7 214.4 L644.1 213.2 L645.7 212.7 L647.3 213.0 L648.7 214.1 L650.0 215.5 L651.8 216.5 L653.6 217.4 L655.2 217.9 L657.2 218.0 L659.0 219.1 L660.6 217.9 L662.0 219.4 L663.6 219.2 L665.4 219.8 L666.8 220.2 L667.7 220.6 L668.8 219.1 L670.2 217.6 L671.8 216.2 L673.6 215.5 L675.3 215.5 L676.7 216.3 L677.7 217.6 L679.0 216.2 L680.4 216.8 L681.7 217.6 L683.5 218.1 L685.4 218.6 L687.6 219.1 L689.2 219.9 L690.8 219.4 L692.6 220.0 L694.4 219.2 L696.0 220.3 L697.4 218.6 L699.0 218.9 L700.8 218.7 L702.5 218.2 L703.9 219.3 L705.3 218.6 L706.2 217.0 L707.6 214.9 L708.9 213.6 L709.9 213.4 L711.0 214.8 L712.1 216.3 L713.4 216.8 L714.8 216.5 L716.1 216.9 L716.8 214.8 L717.8 213.1 L718.9 214.4 L719.8 216.3 L721.2 217.7 L722.5 218.6 L723.9 219.1 L724.8 219.7 L726.2 219.0 L728.0 219.4 L729.3 219.9 L731.1 220.5 L732.7 220.2 L734.8 220.1 L736.1 216.3 L737.5 216.2 L739.3 216.5 L740.9 217.7 L742.5 218.8 L743.6 219.8 L744.7 220.4 L746.3 219.4 L748.0 219.0 L749.7 219.9 L751.5 220.6 L753.1 220.2 L754.8 220.8 L756.5 220.6 L758.3 220.9 L759.3 219.1 L760.6 218.5 L762.0 218.4 L762.9 220.4 L764.7 220.4 L766.5 220.4 L768.1 220.2 L769.5 221.1 L770.0 220.5 L771.4 221.2 L773.0 220.9 L774.4 219.4 L775.7 217.7 L777.5 217.5 L778.8 217.7 L779.8 219.3 L781.6 219.9 L783.3 220.5 L784.7 219.4 L786.3 220.5 L788.0 219.2 L789.7 220.6 L791.5 219.9 L793.1 220.8 L794.8 220.4 L796.5 220.6 L798.6 220.8 L800.2 220.5 L802.0 220.2 L803.7 220.5 L805.4 220.8 L806.7 220.4 L807.8 221.0 L808.8 221.4 L810.5 221.3 L811.9 220.6 L813.3 219.8 L815.2 219.4 L816.5 220.7 L818.3 220.7 L820.3 220.7 L822.4 220.6 L823.7 220.2 L825.1 220.0 L826.9 220.4 L828.5 220.4 L829.8 220.5 L830.5 218.8 L831.5 217.3 L832.8 217.6 L834.2 218.1 L835.6 219.0 L837.3 218.6 L838.7 219.4 L840.5 220.2 L842.1 220.1 L843.7 219.6 L845.1 220.8 L846.8 220.8 L848.6 221.1 L849.6 219.9 L850.5 219.4 L851.9 220.1 L853.7 220.6 L855.4 220.2 L857.1 220.5 L859.1 220.5 L860.5 219.9 L862.2 219.9 L863.9 219.4 L865.5 219.5 L866.8 220.0 L867.7 217.4 L868.6 215.1 L870.0 214.2 L871.3 214.2 L872.0 217.0 L872.7 219.1 L873.6 218.3 L875.4 218.6 L876.8 219.8 L878.1 220.4 L879.5 219.9 L881.3 219.6 L882.2 220.4 L883.6 220.9 L884.9 220.8 L886.3 220.7 L887.2 221.0 L888.1 218.4 L889.0 216.6 L890.4 217.4 L891.7 218.3 L893.8 218.3 L895.8 218.8 L897.9 219.1 L899.5 219.0 L900.8 220.4 L902.6 219.9 L904.4 220.2 L905.7 219.6 L907.4 220.1 L908.7 219.1 L910.1 217.7 L911.5 216.3 L913.5 216.2 L914.9 214.4 L916.2 213.9 L918.0 214.3 L919.3 216.0 L920.7 218.1 L921.7 219.6 L923.0 220.4 L924.8 220.1 L925.7 217.7 L926.7 214.3 L927.8 213.1 L929.4 212.4 L930.5 214.3 L931.6 216.3 L933.2 216.4 L934.9 216.3 L936.2 216.0 L937.6 216.7 L938.9 218.1 L940.7 218.9 L942.5 219.5 L944.1 219.1 L946.0 218.4 L947.4 218.9 L949.0 217.9 L950.8 218.2 L952.1 219.6 L953.5 219.4 L954.4 217.6 L956.2 217.3 L958.0 217.7 L959.6 217.3 L961.2 217.1 L963.0 217.1 L964.4 218.9 L966.1 218.4 L967.8 218.9 L969.4 219.8 L971.2 220.6 L972.9 220.1 L974.6 219.9 L975.9 218.4 L977.6 218.7 L979.3 219.0 L981.1 219.1 L982.5 218.2 L984.4 218.2 L986.1 218.3 L987.9 218.9 L989.5 218.3 L991.2 217.7 L992.9 217.4 L994.7 217.6 L996.6 217.8 L998.0 218.6 L999.7 219.3 L1001.1 218.0 L1002.4 218.9 L1004.2 218.8 L1005.6 219.5 L1006.9 220.0 L1008.6 219.7 L1010.2 219.5 L1012.0 219.4 L1013.3 219.0 L1014.7 219.5 L1016.5 219.4 L1017.8 218.1 L1018.8 215.6 L1019.4 213.5 L1020.8 213.5 L1021.5 215.6 L1022.4 217.6 L1023.8 217.7 L1025.2 218.6 L1026.9 218.7 L1028.7 219.3 L1030.3 219.8 L1032.0 220.1 L1033.7 219.9 L1035.1 219.7 L1036.5 220.2 L1038.2 220.6 L1039.2 218.8 L1040.1 217.6 L1041.5 218.3 L1043.3 218.4 L1044.6 218.0 L1046.0 218.0 L1046.9 219.4 L1048.7 219.0 L1050.5 219.0 L1052.1 219.4 L1053.7 219.8 L1055.5 219.4 L1056.9 219.9 L1058.2 218.9 L1059.6 217.4 L1060.9 217.3 L1062.3 218.2 L1064.1 218.3 L1065.4 219.7 L1066.8 218.4 L1068.1 219.5 L1069.8 218.6 L1070.9 219.1 L1071.8 221.0 L1073.6 220.8 L1075.2 220.8 L1076.8 220.6 L1077.9 219.6 L1079.3 219.4 L1080.9 219.9 L1082.7 220.4 L1084.5 220.7 L1086.1 220.9 L1087.5 221.1 L1089.1 220.8 L1090.9 221.0 L1092.6 221.2 L1094.3 221.2 L1095.6 220.8 L1097.3 220.4 L1098.6 220.9 L1100.0 221.2 L1102.1 221.0 L1103.8 221.3 L1105.8 221.4 L1107.9 221.5 L1109.9 221.5 L1111.9 221.5 L1114.7 221.5 L1120.1 221.5 L1120.1 221.5 L1114.7 221.5 L1112.2 221.5 L1109.9 221.5 L1107.9 221.5 L1105.8 221.5 L1103.8 221.6 L1101.7 221.6 L1100.4 221.5 L1098.6 221.8 L1097.0 222.0 L1095.3 222.1 L1094.0 221.6 L1092.6 221.9 L1090.9 222.0 L1088.8 222.2 L1087.2 222.1 L1085.4 222.9 L1083.6 223.7 L1082.0 223.9 L1080.4 223.5 L1078.6 222.9 L1076.8 223.3 L1075.2 222.5 L1073.6 223.1 L1072.2 222.2 L1070.5 222.9 L1069.1 222.5 L1067.1 223.0 L1065.4 224.2 L1064.1 223.8 L1063.2 225.4 L1062.3 226.8 L1061.3 226.6 L1060.0 225.4 L1058.2 225.2 L1057.3 223.7 L1055.1 224.5 L1053.5 224.1 L1051.8 224.2 L1050.1 225.7 L1048.3 224.8 L1046.7 225.6 L1045.3 224.9 L1043.7 225.6 L1041.5 225.7 L1039.9 225.2 L1038.5 223.5 L1036.9 223.8 L1035.1 223.0 L1034.1 223.2 L1032.4 223.8 L1030.3 224.2 L1028.7 223.7 L1027.3 225.0 L1025.6 225.4 L1023.5 225.7 L1021.9 226.1 L1021.1 229.9 L1020.1 231.6 L1018.8 229.9 L1017.8 225.7 L1016.7 223.0 L1015.6 224.0 L1014.0 224.2 L1012.0 224.5 L1009.9 224.8 L1008.3 224.0 L1006.5 223.4 L1005.6 224.3 L1004.2 225.8 L1002.9 225.9 L1001.1 225.2 L999.0 225.9 L997.0 226.3 L995.2 227.0 L993.9 228.2 L992.2 228.8 L990.6 228.5 L989.3 227.8 L987.9 225.7 L986.5 223.4 L984.8 225.4 L983.4 226.6 L982.0 225.7 L981.1 224.1 L979.3 224.8 L978.0 224.2 L976.2 223.2 L974.6 222.1 L972.9 223.0 L971.2 222.1 L969.4 223.2 L968.0 225.5 L967.1 224.5 L965.7 224.9 L964.4 227.1 L963.0 228.2 L961.2 228.3 L959.3 228.7 L958.0 227.3 L956.9 227.7 L955.5 227.5 L953.9 226.6 L952.8 224.3 L950.8 225.0 L949.4 227.2 L947.6 227.0 L946.0 226.4 L945.2 225.2 L944.1 225.7 L942.7 224.7 L941.1 224.2 L939.3 224.2 L938.0 227.0 L936.2 226.3 L935.3 227.5 L933.9 229.2 L932.5 229.4 L931.2 231.0 L929.4 230.7 L928.1 230.0 L927.1 229.4 L925.7 229.9 L925.1 226.6 L924.0 222.9 L922.6 222.2 L921.7 223.2 L920.3 226.1 L918.9 229.5 L918.0 231.5 L916.6 232.2 L915.3 232.0 L914.2 230.3 L912.5 230.4 L911.2 228.8 L909.8 226.1 L908.7 223.3 L907.6 222.4 L906.7 222.9 L905.7 223.7 L904.0 223.8 L902.6 222.6 L900.6 223.0 L898.5 223.0 L897.2 222.6 L895.8 224.0 L894.5 223.5 L893.1 223.0 L892.1 224.0 L890.8 225.4 L889.4 226.4 L888.1 225.4 L887.2 222.9 L885.6 223.3 L884.0 222.9 L882.2 222.4 L880.4 222.5 L878.8 222.8 L877.5 222.1 L875.4 222.1 L874.1 223.3 L872.7 224.0 L871.7 228.5 L870.7 229.8 L869.3 229.2 L867.9 227.0 L866.8 224.3 L866.0 222.4 L865.2 222.9 L863.6 223.0 L861.8 222.8 L860.5 222.0 L858.7 222.2 L857.1 222.4 L855.4 223.0 L854.1 222.0 L853.0 223.2 L851.3 223.8 L849.6 223.7 L848.6 221.9 L847.3 222.3 L845.5 222.0 L844.1 222.7 L842.1 223.2 L840.5 223.5 L838.7 223.0 L837.3 223.7 L836.0 225.0 L834.6 224.9 L833.4 223.9 L832.3 225.0 L831.2 224.9 L830.1 222.6 L828.8 222.9 L827.1 223.0 L825.5 223.4 L823.7 223.2 L822.0 222.4 L820.3 222.8 L818.7 222.5 L816.9 222.1 L815.6 223.0 L813.8 223.0 L812.2 222.9 L811.1 221.6 L809.7 221.6 L808.4 221.5 L807.0 221.6 L805.6 221.8 L803.7 222.0 L802.0 221.8 L801.0 222.1 L799.2 222.2 L797.2 222.2 L795.2 221.9 L793.4 222.2 L791.8 221.9 L790.1 221.9 L788.4 222.0 L786.3 221.8 L784.7 222.5 L782.9 222.1 L781.2 223.0 L779.5 224.0 L777.9 225.0 L776.1 225.3 L774.4 224.0 L773.0 222.1 L771.4 221.6 L770.0 221.9 L768.1 222.1 L766.1 222.4 L764.7 222.0 L763.3 222.2 L761.6 223.2 L759.7 222.7 L758.2 221.8 L756.5 222.6 L754.8 222.4 L753.1 222.0 L751.1 222.4 L749.3 222.4 L747.7 221.9 L745.7 222.7 L743.6 223.2 L742.3 224.0 L740.6 224.7 L739.3 226.1 L737.9 227.2 L736.8 226.1 L735.5 224.0 L734.1 223.5 L732.7 223.0 L730.7 222.8 L729.3 222.2 L727.3 222.9 L725.7 222.4 L723.9 223.2 L721.9 223.7 L720.5 224.7 L719.4 227.1 L718.5 229.4 L717.5 229.5 L716.1 228.2 L715.1 226.6 L714.0 226.3 L713.0 229.1 L711.7 229.0 L710.3 228.4 L708.5 228.7 L706.9 228.2 L705.5 226.8 L704.4 225.2 L703.5 226.3 L702.1 226.7 L700.4 226.4 L698.7 225.8 L697.1 226.1 L695.7 224.8 L693.6 225.5 L691.9 225.9 L690.3 226.1 L689.2 224.8 L687.9 226.1 L686.2 226.6 L684.9 228.4 L683.5 228.7 L682.1 227.8 L680.8 229.8 L679.0 229.2 L677.2 228.5 L675.6 228.2 L674.3 227.1 L672.9 228.5 L671.8 229.6 L670.4 229.7 L669.5 227.8 L668.5 224.5 L667.4 222.1 L666.1 222.9 L664.5 222.9 L663.4 224.0 L662.0 225.6 L660.4 225.9 L659.0 224.9 L658.2 226.3 L657.2 227.8 L655.9 226.5 L653.8 226.9 L652.2 227.1 L650.9 228.5 L649.8 230.2 L648.7 231.1 L647.7 230.7 L646.8 232.5 L645.7 233.2 L644.3 232.7 L643.0 231.9 L641.6 230.9 L640.5 229.9 L639.6 225.7 L638.9 222.4 L637.5 222.9 L635.9 222.6 L634.1 222.8 L633.2 225.4 L631.8 227.5 L630.5 229.2 L629.1 230.7 L627.3 230.7 L626.4 229.5 L625.0 227.1 L623.2 225.7 L621.9 224.0 L620.7 222.4 L619.6 222.6 L617.8 222.8 L616.4 224.0 L615.1 227.1 L614.1 230.3 L613.0 230.3 L612.0 229.4 L610.3 230.4 L608.7 231.2 L607.3 232.0 L606.0 231.2 L604.6 229.5 L603.2 227.1 L601.9 224.3 L600.8 222.8 L598.8 222.4 L597.0 223.0 L595.4 223.3 L594.0 222.4 L592.8 223.3 L590.7 223.7 L589.1 224.0 L587.3 224.5 L586.0 225.4 L584.6 226.3 L583.3 226.4 L582.6 224.0 L581.9 221.6 L580.5 221.7 L579.2 221.8 L577.1 221.9 L575.1 222.0 L573.3 222.4 L571.7 222.1 L570.3 222.4 L569.0 224.0 L567.9 225.7 L566.9 230.0 L566.0 232.4 L564.9 232.5 L564.2 230.0 L563.5 225.7 L562.9 222.9 L561.5 223.5 L559.7 222.8 L558.1 223.3 L556.7 223.2 L555.1 222.2 L553.3 222.8 L551.3 222.9 L549.3 223.1 L547.5 222.6 L545.9 222.9 L544.5 221.9 L542.5 222.0 L541.1 222.2 L539.1 222.5 L537.0 222.4 L535.0 222.8 L533.3 223.5 L531.6 223.3 L530.2 224.4 L528.9 224.3 L527.5 223.3 L526.1 222.1 L524.1 222.5 L522.1 222.4 L520.0 222.0 L518.4 222.1 L516.6 221.8 L514.8 222.1 L512.9 221.9 L511.2 222.3 L509.1 222.6 L507.8 221.7 L506.1 222.0 L504.4 222.2 L502.6 221.9 L501.0 222.4 L499.3 222.1 L497.6 222.2 L496.2 223.0 L494.8 224.2 L493.1 224.6 L491.7 224.2 L490.4 223.0 L489.4 221.9 L488.5 222.3 L486.7 222.5 L484.6 222.5 L483.0 223.4 L481.7 223.1 L479.9 222.7 L477.8 223.0 L475.8 223.2 L474.0 224.7 L472.4 224.8 L470.8 224.0 L469.4 222.6 L468.1 221.8 L466.3 222.1 L464.2 222.4 L462.2 222.7 L460.4 222.9 L458.8 222.1 L457.4 223.8 L456.1 224.4 L454.5 224.1 L453.1 223.0 L452.0 222.0 L450.0 222.1 L447.9 222.0 L445.9 221.9 L443.8 221.7 L442.2 222.0 L440.4 222.2 L438.7 222.0 L437.0 221.7 L434.3 221.7 L432.3 221.6 L430.2 221.5 L428.2 221.5 L426.2 221.5 L420.4 221.5 Z"/>
</defs>
<g fill="#b27600"><rect x="420" y="186.6" width="700" height="2.5"/><rect x="420" y="220.2" width="700" height="2.5"/></g>
<g fill="#ef9b00" stroke="#c07a00" stroke-width="0.9" stroke-linejoin="round"><use href="#w1"/><use href="#w2"/></g>
<g fill="#ef9b00" stroke="#b87400" stroke-width="1.2" stroke-linejoin="round"><use href="#w3"/><use href="#w4"/></g>
<rect x="720" y="171" width="28" height="657" fill="url(#cshadow)"/>
</svg>
</div>
<div id="rp" class="abs" style="left:1121px;top:171px;width:201px;height:691px;background:#022a28;"></div>
<div id="ruler" class="abs" style="left:420px;top:829px;width:702px;height:33px;background:#022826;"></div>
<svg class="abs" style="left:420px;top:171px" width="902" height="691" viewBox="420 171 902 691">
<rect x="1120.3" y="171" width="1.6" height="658.5" fill="#a4acac"/>
<rect x="420" y="827.8" width="701.9" height="1.6" fill="#8e9696"/>
<g fill="#a2aaaa"><rect x="419.8" y="829" width="1.6" height="15.5"/><rect x="431.5" y="831.3" width="1.8" height="1.8" fill="#929a98"/><rect x="442.0" y="831.3" width="1.8" height="1.8" fill="#929a98"/><rect x="452.4" y="831.3" width="1.8" height="1.8" fill="#929a98"/><rect x="462.9" y="831.3" width="1.8" height="1.8" fill="#929a98"/><rect x="472.0" y="829" width="1.6" height="5.5"/><rect x="483.7" y="831.3" width="1.8" height="1.8" fill="#929a98"/><rect x="494.1" y="831.3" width="1.8" height="1.8" fill="#929a98"/><rect x="504.5" y="831.3" width="1.8" height="1.8" fill="#929a98"/><rect x="514.9" y="831.3" width="1.8" height="1.8" fill="#929a98"/><rect x="524.0" y="829" width="1.6" height="15.5"/><rect x="535.7" y="831.3" width="1.8" height="1.8" fill="#929a98"/><rect x="546.1" y="831.3" width="1.8" height="1.8" fill="#929a98"/><rect x="556.6" y="831.3" width="1.8" height="1.8" fill="#929a98"/><rect x="567.0" y="831.3" width="1.8" height="1.8" fill="#929a98"/><rect x="576.1" y="829" width="1.6" height="5.5"/><rect x="587.8" y="831.3" width="1.8" height="1.8" fill="#929a98"/><rect x="598.2" y="831.3" width="1.8" height="1.8" fill="#929a98"/><rect x="608.6" y="831.3" width="1.8" height="1.8" fill="#929a98"/><rect x="619.0" y="831.3" width="1.8" height="1.8" fill="#929a98"/><rect x="628.1" y="829" width="1.6" height="15.5"/><rect x="639.8" y="831.3" width="1.8" height="1.8" fill="#929a98"/><rect x="650.2" y="831.3" width="1.8" height="1.8" fill="#929a98"/><rect x="660.7" y="831.3" width="1.8" height="1.8" fill="#929a98"/><rect x="671.1" y="831.3" width="1.8" height="1.8" fill="#929a98"/><rect x="680.2" y="829" width="1.6" height="5.5"/><rect x="691.9" y="831.3" width="1.8" height="1.8" fill="#929a98"/><rect x="702.3" y="831.3" width="1.8" height="1.8" fill="#929a98"/><rect x="712.7" y="831.3" width="1.8" height="1.8" fill="#929a98"/><rect x="723.1" y="831.3" width="1.8" height="1.8" fill="#929a98"/><rect x="732.2" y="829" width="1.6" height="15.5"/><rect x="743.9" y="831.3" width="1.8" height="1.8" fill="#929a98"/><rect x="754.2" y="831.3" width="1.8" height="1.8" fill="#929a98"/><rect x="764.6" y="831.3" width="1.8" height="1.8" fill="#929a98"/><rect x="774.9" y="831.3" width="1.8" height="1.8" fill="#929a98"/><rect x="784.0" y="829" width="1.6" height="5.5"/><rect x="795.7" y="831.3" width="1.8" height="1.8" fill="#929a98"/><rect x="806.2" y="831.3" width="1.8" height="1.8" fill="#929a98"/><rect x="816.6" y="831.3" width="1.8" height="1.8" fill="#929a98"/><rect x="827.1" y="831.3" width="1.8" height="1.8" fill="#929a98"/><rect x="836.2" y="829" width="1.6" height="15.5"/><rect x="847.9" y="831.3" width="1.8" height="1.8" fill="#929a98"/><rect x="858.3" y="831.3" width="1.8" height="1.8" fill="#929a98"/><rect x="868.7" y="831.3" width="1.8" height="1.8" fill="#929a98"/><rect x="879.1" y="831.3" width="1.8" height="1.8" fill="#929a98"/><rect x="888.2" y="829" width="1.6" height="5.5"/><rect x="900.3" y="831.3" width="1.8" height="1.8" fill="#929a98"/><rect x="911.0" y="831.3" width="1.8" height="1.8" fill="#929a98"/><rect x="921.8" y="831.3" width="1.8" height="1.8" fill="#929a98"/><rect x="932.5" y="831.3" width="1.8" height="1.8" fill="#929a98"/><rect x="942.0" y="829" width="1.6" height="15.5"/><rect x="953.7" y="831.3" width="1.8" height="1.8" fill="#929a98"/><rect x="964.1" y="831.3" width="1.8" height="1.8" fill="#929a98"/><rect x="974.5" y="831.3" width="1.8" height="1.8" fill="#929a98"/><rect x="984.9" y="831.3" width="1.8" height="1.8" fill="#929a98"/><rect x="994.0" y="829" width="1.6" height="5.5"/><rect x="1005.8" y="831.3" width="1.8" height="1.8" fill="#929a98"/><rect x="1016.2" y="831.3" width="1.8" height="1.8" fill="#929a98"/><rect x="1026.7" y="831.3" width="1.8" height="1.8" fill="#929a98"/><rect x="1037.1" y="831.3" width="1.8" height="1.8" fill="#929a98"/><rect x="1046.3" y="829" width="1.6" height="15.5"/><rect x="1058.0" y="831.3" width="1.8" height="1.8" fill="#929a98"/><rect x="1068.4" y="831.3" width="1.8" height="1.8" fill="#929a98"/><rect x="1078.7" y="831.3" width="1.8" height="1.8" fill="#929a98"/><rect x="1089.1" y="831.3" width="1.8" height="1.8" fill="#929a98"/><rect x="1098.2" y="829" width="1.6" height="5.5"/><rect x="1109.9" y="831.3" width="1.8" height="1.8" fill="#929a98"/></g>
<g fill="#a2aaaa"><rect x="1123.5" y="527.7" width="1.8" height="1.8" fill="#929a98"/><rect x="1121" y="518.8" width="6" height="1.6"/><rect x="1123.5" y="509.7" width="1.8" height="1.8" fill="#929a98"/><rect x="1123.5" y="500.7" width="1.8" height="1.8" fill="#929a98"/><rect x="1123.5" y="491.7" width="1.8" height="1.8" fill="#929a98"/><rect x="1123.5" y="482.7" width="1.8" height="1.8" fill="#929a98"/><rect x="1121" y="473.8" width="6" height="1.6"/><rect x="1123.5" y="464.7" width="1.8" height="1.8" fill="#929a98"/><rect x="1123.5" y="455.7" width="1.8" height="1.8" fill="#929a98"/><rect x="1123.5" y="446.7" width="1.8" height="1.8" fill="#929a98"/><rect x="1123.5" y="437.7" width="1.8" height="1.8" fill="#929a98"/><rect x="1121" y="428.8" width="6" height="1.6"/><rect x="1123.5" y="419.7" width="1.8" height="1.8" fill="#929a98"/><rect x="1123.5" y="410.7" width="1.8" height="1.8" fill="#929a98"/><rect x="1123.5" y="401.7" width="1.8" height="1.8" fill="#929a98"/><rect x="1123.5" y="392.7" width="1.8" height="1.8" fill="#929a98"/><rect x="1121" y="383.8" width="6" height="1.6"/><rect x="1123.5" y="374.7" width="1.8" height="1.8" fill="#929a98"/><rect x="1123.5" y="365.7" width="1.8" height="1.8" fill="#929a98"/><rect x="1123.5" y="356.7" width="1.8" height="1.8" fill="#929a98"/><rect x="1123.5" y="347.7" width="1.8" height="1.8" fill="#929a98"/><rect x="1121" y="338.8" width="6" height="1.6"/><rect x="1123.5" y="329.7" width="1.8" height="1.8" fill="#929a98"/><rect x="1123.5" y="320.7" width="1.8" height="1.8" fill="#929a98"/><rect x="1123.5" y="311.7" width="1.8" height="1.8" fill="#929a98"/><rect x="1123.5" y="302.7" width="1.8" height="1.8" fill="#929a98"/><rect x="1121" y="293.8" width="6" height="1.6"/><rect x="1123.5" y="284.7" width="1.8" height="1.8" fill="#929a98"/><rect x="1123.5" y="275.7" width="1.8" height="1.8" fill="#929a98"/><rect x="1123.5" y="266.7" width="1.8" height="1.8" fill="#929a98"/><rect x="1123.5" y="257.7" width="1.8" height="1.8" fill="#929a98"/><rect x="1121" y="247.9" width="6" height="1.6"/><rect x="1123.5" y="239.7" width="1.8" height="1.8" fill="#929a98"/><rect x="1123.5" y="823.6" width="1.8" height="1.8" fill="#929a98"/><rect x="1121" y="814.7" width="6" height="1.6"/><rect x="1123.5" y="805.6" width="1.8" height="1.8" fill="#929a98"/><rect x="1123.5" y="796.6" width="1.8" height="1.8" fill="#929a98"/><rect x="1123.5" y="787.6" width="1.8" height="1.8" fill="#929a98"/><rect x="1123.5" y="778.6" width="1.8" height="1.8" fill="#929a98"/><rect x="1121" y="769.7" width="6" height="1.6"/><rect x="1123.5" y="760.6" width="1.8" height="1.8" fill="#929a98"/><rect x="1123.5" y="751.6" width="1.8" height="1.8" fill="#929a98"/><rect x="1123.5" y="742.6" width="1.8" height="1.8" fill="#929a98"/><rect x="1123.5" y="733.6" width="1.8" height="1.8" fill="#929a98"/><rect x="1121" y="724.7" width="6" height="1.6"/><rect x="1123.5" y="715.6" width="1.8" height="1.8" fill="#929a98"/><rect x="1123.5" y="706.6" width="1.8" height="1.8" fill="#929a98"/><rect x="1123.5" y="697.6" width="1.8" height="1.8" fill="#929a98"/><rect x="1123.5" y="688.6" width="1.8" height="1.8" fill="#929a98"/><rect x="1121" y="679.7" width="6" height="1.6"/><rect x="1123.5" y="670.6" width="1.8" height="1.8" fill="#929a98"/><rect x="1123.5" y="661.6" width="1.8" height="1.8" fill="#929a98"/><rect x="1123.5" y="652.6" width="1.8" height="1.8" fill="#929a98"/><rect x="1123.5" y="643.6" width="1.8" height="1.8" fill="#929a98"/><rect x="1121" y="634.7" width="6" height="1.6"/><rect x="1123.5" y="625.6" width="1.8" height="1.8" fill="#929a98"/><rect x="1123.5" y="616.6" width="1.8" height="1.8" fill="#929a98"/><rect x="1123.5" y="607.6" width="1.8" height="1.8" fill="#929a98"/><rect x="1123.5" y="598.6" width="1.8" height="1.8" fill="#929a98"/><rect x="1121" y="589.7" width="6" height="1.6"/><rect x="1123.5" y="580.6" width="1.8" height="1.8" fill="#929a98"/><rect x="1123.5" y="571.6" width="1.8" height="1.8" fill="#929a98"/><rect x="1123.5" y="562.6" width="1.8" height="1.8" fill="#929a98"/><rect x="1123.5" y="553.6" width="1.8" height="1.8" fill="#929a98"/><rect x="1121" y="543.8" width="6" height="1.6"/><rect x="1123.5" y="535.6" width="1.8" height="1.8" fill="#929a98"/></g>
<g font-family="Liberation Sans, sans-serif" font-size="16" letter-spacing="-0.35" fill="#a0a6a4" style="text-shadow:1px 1px 1px #000"><text x="1130.5" y="256.9">smpl</text><text x="1130.5" y="300.4">+20000</text><text x="1130.5" y="345.4">+10000</text><text x="1130.5" y="390.4">+0</text><text x="1130.5" y="435.4">-10000</text><text x="1130.5" y="480.4">-20000</text><text x="1130.5" y="552.8">smpl</text><text x="1130.5" y="596.3">+20000</text><text x="1130.5" y="641.3">+10000</text><text x="1130.5" y="686.3">+0</text><text x="1130.5" y="731.3">-10000</text><text x="1130.5" y="776.3">-20000</text></g>
<g font-family="Liberation Sans, sans-serif" font-size="16" letter-spacing="-0.35" fill="#a0a6a4" style="text-shadow:1px 1px 1px #000"><text x="427.1" y="853.6">0.000</text><text x="531.3" y="853.6">2.000</text><text x="635.4" y="853.6">4.000</text><text x="739.5" y="853.6">6.000</text><text x="843.5" y="853.6">8.000</text><text x="949.3" y="853.6">10.000</text><text x="1053.6" y="853.6">12.000</text></g>
<g fill="none" stroke="#d2d6d6"><circle cx="1152.5" cy="200.3" r="10.6" stroke-width="2.6"/><path d="M1147 200.3 L1158 200.3 M1152.5 194.8 L1152.5 205.8" stroke-width="2"/><path d="M1161 209 L1171 219" stroke-width="4.6" stroke-linecap="round"/></g>
<g fill="#36504e"><rect x="1195.4" y="188" width="1.2" height="25"/><rect x="1200.6" y="188" width="1.2" height="25"/><rect x="1205.8" y="188" width="1.2" height="25"/></g>
<defs><linearGradient id="mg" x1="0" y1="0" x2="0" y2="1"><stop offset="0" stop-color="#2c0000"/><stop offset="0.02" stop-color="#340700"/><stop offset="0.045" stop-color="#3b1c00"/><stop offset="0.07" stop-color="#3f3000"/><stop offset="0.1" stop-color="#3f3c00"/><stop offset="0.16" stop-color="#3a3d00"/><stop offset="0.27" stop-color="#2f3900"/><stop offset="0.42" stop-color="#253400"/><stop offset="0.7" stop-color="#1d3000"/><stop offset="1" stop-color="#192d00"/></linearGradient>
<pattern id="stripe" x="0" y="268.6" width="20" height="3.4" patternUnits="userSpaceOnUse"><rect x="0" y="0" width="20" height="2.1" fill="#000" fill-opacity="0"/><rect x="0" y="2.1" width="20" height="1.3" fill="#000" fill-opacity="0.4"/></pattern></defs>
<rect x="1204.5" y="242.3" width="22.4" height="13.8" fill="none" stroke="#36423f" stroke-width="1.2"/>
<rect x="1207.5" y="245.3" width="16.4" height="7.8" fill="#3a0000"/><rect x="1207.5" y="248.6" width="16.4" height="1.2" fill="#1c0000"/>
<rect x="1204.5" y="265.8" width="22.4" height="531" fill="none" stroke="#36423f" stroke-width="1.2"/>
<rect x="1207.5" y="268.8" width="16.4" height="525" fill="url(#mg)"/><rect x="1207.5" y="268.8" width="16.4" height="525" fill="url(#stripe)"/>
<rect x="1236.3" y="242.3" width="22.4" height="13.8" fill="none" stroke="#36423f" stroke-width="1.2"/>
<rect x="1239.3" y="245.3" width="16.4" height="7.8" fill="#3a0000"/><rect x="1239.3" y="248.6" width="16.4" height="1.2" fill="#1c0000"/>
<rect x="1236.3" y="265.8" width="22.4" height="531" fill="none" stroke="#36423f" stroke-width="1.2"/>
<rect x="1239.3" y="268.8" width="16.4" height="525" fill="url(#mg)"/><rect x="1239.3" y="268.8" width="16.4" height="525" fill="url(#stripe)"/>
<g fill="#a2aaaa"><rect x="1264" y="270.0" width="10.5" height="1.6"/><rect x="1264" y="280.4" width="7" height="1.6"/><rect x="1264" y="290.9" width="7" height="1.6"/><rect x="1264" y="301.3" width="7" height="1.6"/><rect x="1264" y="311.8" width="7" height="1.6"/><rect x="1264" y="322.2" width="10.5" height="1.6"/><rect x="1264" y="332.6" width="7" height="1.6"/><rect x="1264" y="343.1" width="7" height="1.6"/><rect x="1264" y="353.5" width="7" height="1.6"/><rect x="1264" y="364.0" width="7" height="1.6"/><rect x="1264" y="374.4" width="10.5" height="1.6"/><rect x="1264" y="384.8" width="7" height="1.6"/><rect x="1264" y="395.3" width="7" height="1.6"/><rect x="1264" y="405.7" width="7" height="1.6"/><rect x="1264" y="416.2" width="7" height="1.6"/><rect x="1264" y="426.6" width="10.5" height="1.6"/><rect x="1264" y="437.0" width="7" height="1.6"/><rect x="1264" y="447.5" width="7" height="1.6"/><rect x="1264" y="457.9" width="7" height="1.6"/><rect x="1264" y="468.4" width="7" height="1.6"/><rect x="1264" y="478.8" width="10.5" height="1.6"/><rect x="1264" y="489.2" width="7" height="1.6"/><rect x="1264" y="499.7" width="7" height="1.6"/><rect x="1264" y="510.1" width="7" height="1.6"/><rect x="1264" y="520.6" width="7" height="1.6"/><rect x="1264" y="531.0" width="10.5" height="1.6"/><rect x="1264" y="541.4" width="7" height="1.6"/><rect x="1264" y="551.9" width="7" height="1.6"/><rect x="1264" y="562.3" width="7" height="1.6"/><rect x="1264" y="572.8" width="7" height="1.6"/><rect x="1264" y="583.2" width="10.5" height="1.6"/><rect x="1264" y="593.6" width="7" height="1.6"/><rect x="1264" y="604.1" width="7" height="1.6"/><rect x="1264" y="614.5" width="7" height="1.6"/><rect x="1264" y="625.0" width="7" height="1.6"/><rect x="1264" y="635.4" width="10.5" height="1.6"/><rect x="1264" y="645.8" width="7" height="1.6"/><rect x="1264" y="656.3" width="7" height="1.6"/><rect x="1264" y="666.7" width="7" height="1.6"/><rect x="1264" y="677.2" width="7" height="1.6"/><rect x="1264" y="687.6" width="10.5" height="1.6"/><rect x="1264" y="698.0" width="7" height="1.6"/><rect x="1264" y="708.5" width="7" height="1.6"/><rect x="1264" y="718.9" width="7" height="1.6"/><rect x="1264" y="729.4" width="7" height="1.6"/><rect x="1264" y="739.8" width="10.5" height="1.6"/><rect x="1264" y="750.2" width="7" height="1.6"/><rect x="1264" y="760.7" width="7" height="1.6"/><rect x="1264" y="771.1" width="7" height="1.6"/><rect x="1264" y="781.6" width="7" height="1.6"/><rect x="1264" y="792.0" width="10.5" height="1.6"/></g>
<g font-family="Liberation Sans, sans-serif" font-size="16" fill="#a0a6a4" letter-spacing="-0.9" style="text-shadow:1px 1px 1px #000"><text x="1278" y="253.2" font-size="16.5">dB</text><text x="1278" y="276.4">0</text><text x="1278" y="328.6">-6</text><text x="1278" y="380.8">-12</text><text x="1278" y="433.0">-18</text><text x="1278" y="485.2">-24</text><text x="1278" y="537.4">-30</text><text x="1278" y="589.6">-36</text><text x="1278" y="641.8">-42</text><text x="1278" y="694.0">-48</text><text x="1278" y="746.2">-54</text><text x="1278" y="798.4">-60</text></g>
<g fill="#3a5a57"><path d="M1215 818 L1225 818 L1236 810 L1236 839 L1225 831 L1215 831 Z"/></g><g fill="none" stroke="#3a5a57" stroke-width="2.1"><path d="M1239.5 821.5 Q1241.5 824.5 1239.5 827.5"/><path d="M1242 818 Q1246 824.5 1242 831"/><path d="M1245 814.5 Q1251 824.5 1245 834.5"/></g>
<rect x="735.6" y="171" width="1.5" height="651" fill="#f4f0e4"/>
<path d="M736.3 820.2 L743.2 826.6 L743.2 833.4 L729.4 833.4 L729.4 826.6 Z" fill="#0c0c0c" stroke="#ececec" stroke-width="2" stroke-linejoin="round"/>
</svg>
</body>
</html>
